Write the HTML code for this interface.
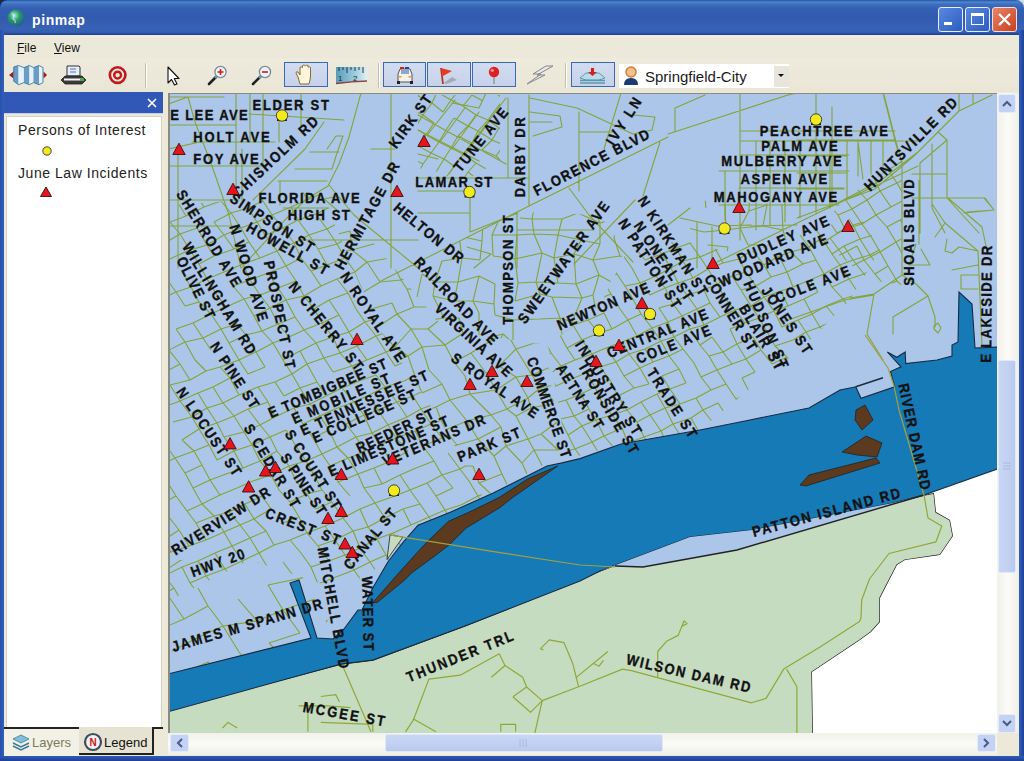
<!DOCTYPE html>
<html><head><meta charset="utf-8">
<style>
*{margin:0;padding:0;box-sizing:border-box}
html,body{width:1024px;height:761px;overflow:hidden;background:#ece9d8;font-family:"Liberation Sans",sans-serif}
.a{position:absolute}
#title{left:0;top:0;width:1024px;height:35px;background:linear-gradient(#2a50a0 0px,#4a88d0 2px,#3f70c0 4px,#345eb2 9px,#325bb0 18px,#3862b4 29px,#3360b0 32px,#1e3e8a 35px);border-radius:8px 8px 0 0}
#lb{left:0;top:30px;width:4px;height:731px;background:linear-gradient(90deg,#2a50a8,#3060bc)}
#rb{left:1019px;top:30px;width:5px;height:731px;background:linear-gradient(90deg,#3060bc,#1f3f98)}
#bb{left:0;top:756px;width:1024px;height:5px;background:linear-gradient(#2f5bb5,#1f3f98)}
#menu{left:4px;top:35px;width:1015px;height:23px;background:linear-gradient(#ecebe6 0px,#ecebe6 1px,#ede9da 2px)}
#tool{left:4px;top:58px;width:1015px;height:34px;background:linear-gradient(#eeebdd,#e9e6d6)}
#ttl{left:32px;top:12px;color:#fff;font-weight:bold;font-size:14px;letter-spacing:0.6px}
.mi{top:41px;font-size:12px;color:#111}
.tb{border:1px solid #3e64b4;background:#d4dcee;height:25px;top:62px}
#panelhdr{left:4px;top:92px;width:159px;height:21px;background:#3158b6}
#panel{left:8px;top:118px;width:152px;height:610px;background:#fff}
.lg{font-size:14px;color:#222;left:18px;letter-spacing:0.55px}
</style></head><body>
<div class="a" style="left:0;top:0;width:8px;height:8px;background:#1a2a50"></div><div class="a" style="left:1016px;top:0;width:8px;height:8px;background:#d8dce8"></div>
<div id="title" class="a"></div>
<svg class="a" style="left:6px;top:8px" width="20" height="20" viewBox="0 0 20 20"><defs><radialGradient id="gl" cx="0.4" cy="0.35" r="0.7"><stop offset="0" stop-color="#b0e8f0"/><stop offset="0.45" stop-color="#2a9a60"/><stop offset="1" stop-color="#1a5a9a"/></radialGradient></defs><circle cx="10" cy="10" r="8.5" fill="url(#gl)"/><path d="M6 5 Q9 8 7 11 Q10 12 9 15" stroke="#d8f0ff" stroke-width="1.2" fill="none" opacity="0.7"/></svg>
<div id="ttl" class="a">pinmap</div>
<!-- title buttons -->
<div class="a" style="left:938px;top:7px;width:25px;height:25px;border:1px solid #e8eefc;border-radius:3px;background:linear-gradient(135deg,#5a88e0,#2c5ec0)"></div>
<div class="a" style="left:944px;top:22px;width:8px;height:3px;background:#fff"></div>
<div class="a" style="left:965px;top:7px;width:25px;height:25px;border:1px solid #e8eefc;border-radius:3px;background:linear-gradient(135deg,#5a88e0,#2c5ec0)"></div>
<div class="a" style="left:971px;top:13px;width:13px;height:12px;border:1px solid #fff;border-top:3px solid #fff"></div>
<div class="a" style="left:992px;top:7px;width:25px;height:25px;border:1px solid #f0e0dc;border-radius:3px;background:linear-gradient(135deg,#e8856a,#c8401e)"></div>
<svg class="a" style="left:992px;top:7px" width="25" height="25"><path d="M7 7 L18 18 M18 7 L7 18" stroke="#fff" stroke-width="2.3"/></svg>
<div id="lb" class="a"></div><div id="rb" class="a"></div><div id="bb" class="a"></div>
<div id="menu" class="a"></div>
<div class="a mi" style="left:17px"><u>F</u>ile</div>
<div class="a mi" style="left:54px"><u>V</u>iew</div>
<div id="tool" class="a"></div>

<svg class="a" style="left:0;top:0" width="1024" height="95" viewBox="0 0 1024 95">
<defs>
<linearGradient id="btn" x1="0" y1="0" x2="0" y2="1"><stop offset="0" stop-color="#d2dcf0"/><stop offset="1" stop-color="#c6d2ea"/></linearGradient>
<linearGradient id="rul" x1="0" y1="0" x2="1" y2="0"><stop offset="0" stop-color="#5a9cb8"/><stop offset="0.6" stop-color="#9ccbdc"/><stop offset="1" stop-color="#e0f0f4"/></linearGradient>
</defs>
<!-- map icon -->
<polygon points="9,75 13.5,71.5 13.5,78.5" fill="#a01818"/>
<polygon points="47,75 43.5,71.5 43.5,78.5" fill="#a01818"/>
<polygon points="13.7,67 18.5,65.5 18.5,84.7 13.7,81.2" fill="#6a9cc4"/>
<polygon points="18.5,65.5 23.9,67.6 23.9,82.6 18.5,84.7" fill="#e4f2fa"/>
<polygon points="23.9,67.6 29.4,65.5 29.4,84.7 23.9,82.6" fill="#6a9cc4"/>
<polygon points="29.4,65.5 33.5,67.6 33.5,82.6 29.4,84.7" fill="#e4f2fa"/>
<polygon points="33.5,67.6 39,65.5 39,84.7 33.5,82.6" fill="#6a9cc4"/>
<polygon points="39,65.5 43,67.6 43,82.6 39,84.7" fill="#e4f2fa"/>
<polygon points="13.7,67 18.5,65.5 23.9,67.6 29.4,65.5 33.5,67.6 39,65.5 43,67.6 43,82.6 39,84.7 33.5,82.6 29.4,84.7 23.9,82.6 18.5,84.7 13.7,81.2" fill="none" stroke="#3d78a8" stroke-width="0.9"/>
<!-- printer -->
<path d="M67 76 V66 H79 L80 67 V76Z" fill="#e8eef8" stroke="#333" stroke-width="1"/>
<path d="M70 69 H76 M70 72 H76" stroke="#5070b0" stroke-width="1"/>
<path d="M61 80 L65 76 H82 L86 80 L82 84 H65Z" fill="#3a3a3a" stroke="#222" stroke-width="0.8"/>
<rect x="64" y="78.5" width="19" height="2" fill="#f4f4f4"/>
<rect x="80" y="78.5" width="4" height="2.5" fill="#40b040"/>
<!-- target -->
<circle cx="117.6" cy="75.1" r="7.8" fill="none" stroke="#c0181c" stroke-width="2.6"/>
<circle cx="117.6" cy="75.1" r="3.4" fill="none" stroke="#c0181c" stroke-width="2.4"/>
<!-- separators -->
<rect x="145" y="63" width="1" height="25" fill="#c4c0b0"/><rect x="146" y="63" width="1" height="25" fill="#fff"/>
<rect x="378" y="63" width="1" height="25" fill="#c4c0b0"/><rect x="379" y="63" width="1" height="25" fill="#fff"/>
<rect x="565" y="63" width="1" height="25" fill="#c4c0b0"/><rect x="566" y="63" width="1" height="25" fill="#fff"/>
<!-- cursor -->
<path d="M168 67 V83 L171.5 79.5 L174.5 85 L177 84 L174.3 78.5 H179Z" fill="#fff" stroke="#111" stroke-width="1.1" stroke-linejoin="round"/>
<!-- zoom in -->
<line x1="209" y1="84" x2="216" y2="77" stroke="#222" stroke-width="2.6" stroke-linecap="round"/>
<line x1="215" y1="78" x2="217" y2="76" stroke="#5aa0c0" stroke-width="2"/>
<circle cx="220.5" cy="72" r="5.6" fill="#f0f4f8" stroke="#7a8a98" stroke-width="1.3"/>
<path d="M217.5 72 H223.5 M220.5 69 V75" stroke="#d01818" stroke-width="1.6"/>
<!-- zoom out -->
<line x1="253" y1="84" x2="260" y2="77" stroke="#222" stroke-width="2.6" stroke-linecap="round"/>
<line x1="259" y1="78" x2="261" y2="76" stroke="#5aa0c0" stroke-width="2"/>
<circle cx="265" cy="72" r="5.6" fill="#f0f4f8" stroke="#7a8a98" stroke-width="1.3"/>
<path d="M262 72 H268" stroke="#d01818" stroke-width="1.6"/>
<!-- hand button -->
<rect x="284.5" y="62.5" width="43" height="24" fill="url(#btn)" stroke="#3a68c0" stroke-width="1"/>
<path d="M300 84 L298 77 L296 73 Q296 71 298 72 L300 75 V68 Q300 66.5 301.5 67 L302.5 67.5 V66 Q303 64.5 304.5 65 L305.5 66 Q306.5 64.5 308 65.5 V67 Q309.5 66.5 310.5 67.5 V76 L310 80 L309 84Z" fill="#fff4dc" stroke="#8a6a30" stroke-width="1"/>
<!-- ruler -->
<path d="M336 67 H367 V81 Q352 82 336 84Z" fill="url(#rul)"/>
<path d="M336 83.5 Q352 81.5 367 81" stroke="#904040" stroke-width="1.3" fill="none"/>
<path d="M339 67 V71 M343 67 V70 M347 67 V73 M351 67 V70 M355 67 V71 M359 67 V70 M363 67 V73" stroke="#1a3a50" stroke-width="1"/>
<text x="338" y="81" font-size="8" font-family="Liberation Sans" fill="#1a2a3a">1</text>
<text x="353" y="81" font-size="8" font-family="Liberation Sans" fill="#1a2a3a">2</text>
<!-- police/flag/pin buttons -->
<rect x="383.5" y="62.5" width="42" height="24" fill="url(#btn)" stroke="#3a68c0" stroke-width="1"/>
<rect x="427.5" y="62.5" width="43" height="24" fill="url(#btn)" stroke="#3a68c0" stroke-width="1"/>
<rect x="472.5" y="62.5" width="43" height="24" fill="url(#btn)" stroke="#3a68c0" stroke-width="1"/>
<!-- police car -->
<path d="M398 82 V74 L400 69 H410 L412 74 V82Z" fill="#f4f2ea" stroke="#555" stroke-width="1"/>
<rect x="400" y="67" width="4" height="2" fill="#d02020"/><rect x="405" y="67" width="4" height="2" fill="#2040c0"/>
<rect x="401" y="70" width="8" height="4" fill="#8aa8d0"/>
<rect x="397" y="81" width="3" height="3" fill="#222"/><rect x="410" y="81" width="3" height="3" fill="#222"/>
<rect x="399" y="76" width="2.5" height="1.5" fill="#e8a020"/><rect x="408.5" y="76" width="2.5" height="1.5" fill="#e8a020"/>
<!-- flag -->
<path d="M443 84 L441 68" stroke="#c03020" stroke-width="1.8"/>
<path d="M441 68 L452 71 L443 76Z" fill="#e83a20"/>
<path d="M444 83 L452 77 L457 80 L446 84Z" fill="#9aa0a8" opacity="0.8"/>
<!-- pin -->
<line x1="494" y1="76" x2="494" y2="84" stroke="#888" stroke-width="1.2"/>
<circle cx="494" cy="72" r="5.2" fill="#e02020"/>
<circle cx="492.3" cy="70.3" r="1.6" fill="#ff9a9a"/>
<!-- lightning -->
<path d="M546 66 L533 74 H541 L527 84 L545 75 H537 L553 66Z" fill="#e8e8e8" stroke="#888" stroke-width="1"/>
<!-- layers button -->
<rect x="571.5" y="62.5" width="43" height="24" fill="url(#btn)" stroke="#3a68c0" stroke-width="1"/>
<path d="M580 78 L586 73 H599 L605 78 L599 80 H586Z" fill="#b8dce8" stroke="#4a8aa0" stroke-width="0.8"/>
<path d="M580 80.5 H605 M580 83 H605" stroke="#5a9ab0" stroke-width="1.5"/>
<path d="M588 72 L592.5 76 L597 72Z" fill="#d02020"/><rect x="591" y="68" width="3" height="4" fill="#d02020"/>
<!-- combo -->
<rect x="619" y="64" width="170" height="24" fill="#fff"/>
<rect x="774" y="66" width="15" height="21" fill="#e8e6dc"/>
<path d="M778 74 H784 L781 77Z" fill="#111"/>
<circle cx="631" cy="72" r="5" fill="#f0c090" stroke="#d08030" stroke-width="1.5"/>
<path d="M624 85 Q624 78 631 78 Q638 78 638 85Z" fill="#1a3a70"/>
<text x="645" y="82" font-size="15" font-family="Liberation Sans" fill="#1a1a1a">Springfield-City</text>
</svg>

<!-- left panel -->
<div id="panelhdr" class="a"></div>
<svg class="a" style="left:146px;top:97px" width="12" height="12"><path d="M2 2 L10 10 M10 2 L2 10" stroke="#fff" stroke-width="1.6"/></svg>
<div class="a" style="left:4px;top:113px;width:159px;height:1px;background:#bcd0f0"></div>
<div class="a" style="left:6px;top:116px;width:156px;height:613px;border:1px solid #d6d2c0;background:#fff"></div>
<div class="a lg" style="top:122px">Persons of Interest</div>
<svg class="a" style="left:40px;top:144px" width="14" height="14"><circle cx="7" cy="7" r="4.2" fill="#f2ea1a" stroke="#333" stroke-width="0.9"/></svg>
<div class="a lg" style="top:165px">June Law Incidents</div>
<svg class="a" style="left:39px;top:185px" width="14" height="14"><polygon points="7,2 12.5,11.5 1.5,11.5" fill="#e8141c" stroke="#3a1010" stroke-width="0.9"/></svg>
<!-- tabs -->
<div class="a" style="left:4px;top:727px;width:75px;height:2px;background:#222"></div><div class="a" style="left:154px;top:727px;width:9px;height:2px;background:#222"></div>
<div class="a" style="left:4px;top:729px;width:75px;height:27px;background:#f3f1e6"></div>
<div class="a" style="left:79px;top:727px;width:75px;height:28px;background:#e6e3d3;border-right:2px solid #222;border-bottom:2px solid #222"></div>
<svg class="a" style="left:11px;top:733px" width="20" height="18"><path d="M2 6 L10 2 L18 6 L10 10Z" fill="#7fc0d8" stroke="#3a7a9a" stroke-width="0.8"/><path d="M2 10 L10 14 L18 10 M2 13 L10 17 L18 13" stroke="#3a7a9a" stroke-width="1.5" fill="none"/></svg>
<div class="a" style="left:32px;top:735px;font-size:13px;color:#7d7860">Layers</div>
<svg class="a" style="left:83px;top:732px" width="20" height="20"><circle cx="10" cy="10" r="8" fill="#f4f0f0" stroke="#3b4e5e" stroke-width="2.2"/><text x="10" y="14" font-size="10" font-weight="bold" fill="#d01818" text-anchor="middle" font-family="Liberation Sans">N</text></svg>
<div class="a" style="left:104px;top:735px;font-size:13px;color:#111">Legend</div>
<!-- map border -->
<div class="a" style="left:168px;top:93px;width:850px;height:662px;background:#f4f2e8"></div>
<div class="a" style="left:168px;top:93px;width:829px;height:1px;background:#8a8a80"></div>
<div class="a" style="left:168px;top:93px;width:2px;height:640px;background:#8a8a80"></div>
<svg class="a" style="left:0;top:0" width="1024" height="761" viewBox="0 0 1024 761">
<defs><clipPath id="mc"><rect x="170" y="94" width="827" height="639"/></clipPath></defs>
<g clip-path="url(#mc)">
<rect x="168" y="93" width="829" height="640" fill="#abc6e8"/>
<clipPath id="rg0"><polygon points="170,205 245,200 320,190 380,330 440,420 483,497 427,522 384,564 340,590 250,560 170,600"/></clipPath>
<g clip-path="url(#rg0)" fill="none" stroke="#84a43a" stroke-width="1.1">
<path d="M-130 256L-120 269M-112 249L-103 264M-112 249L-95 240M-95 240L-84 254M-95 240L-80 236M-80 236L-68 247M-62 226L-51 241M-62 226L-43 220M-43 220L-27 213M-27 213L-18 229M-27 213L-10 204M-10 204L6 200M6 200L16 211M23 192L31 206M23 192L40 183M40 183L49 198M40 183L57 178M57 178L64 193M57 178L72 168M72 168L82 186M72 168L91 163M91 163L101 177M91 163L108 157M108 157L116 170M108 157L124 150M124 150L134 164M124 150L140 143M140 143L150 156M140 143L157 136M157 136L175 126M175 126L190 119M190 119L199 134M209 113L219 128M209 113L225 105M225 105L234 118M241 98L250 114M241 98L258 92M258 92L266 106M275 86L292 79M292 79L302 92M292 79L310 72M310 72L319 84M310 72L326 62M326 62L344 58M344 58L350 69M344 58L361 49M361 49L369 65M361 49L377 40M377 40L384 56M377 40L394 35M394 35L402 48M394 35L409 26M409 26L428 22M428 22L435 35M428 22L442 14M442 14L452 27M-120 269L-109 283M-103 264L-93 278M-103 264L-84 254M-84 254L-77 270M-84 254L-68 247M-68 247L-58 262M-68 247L-51 241M-51 241L-44 256M-51 241L-34 236M-18 229L-10 241M-18 229L-2 219M-2 219L16 211M16 211L26 226M16 211L31 206M31 206L49 198M49 198L60 213M49 198L64 193M82 186L92 198M101 177L110 193M101 177L116 170M116 170L124 184M116 170L134 164M134 164L144 178M134 164L150 156M150 156L160 170M150 156L168 149M183 142L194 155M183 142L199 134M199 134L209 149M199 134L219 128M219 128L226 142M219 128L234 118M234 118L245 134M234 118L250 114M250 114L266 106M266 106L278 122M266 106L285 97M285 97L302 92M302 92L312 105M302 92L319 84M319 84L328 100M319 84L336 78M336 78L345 92M336 78L350 69M350 69L360 84M350 69L369 65M369 65L377 76M384 56L395 70M384 56L402 48M402 48L413 62M402 48L419 41M419 41L430 57M419 41L435 35M435 35L447 50M435 35L452 27M452 27L464 42M-109 283L-102 300M-109 283L-93 278M-93 278L-85 291M-77 270L-66 285M-77 270L-58 262M-58 262L-50 279M-58 262L-44 256M-44 256L-33 270M-44 256L-25 248M-25 248L-17 265M-25 248L-10 241M-10 241L0 257M-10 241L9 235M26 226L34 243M41 221L50 236M41 221L60 213M60 213L69 229M74 205L86 219M74 205L92 198M92 198L102 215M92 198L110 193M110 193L117 206M110 193L124 184M124 184L134 199M124 184L144 178M144 178L152 192M160 170L175 163M175 163L184 176M175 163L194 155M194 155L201 169M194 155L209 149M209 149L221 165M209 149L226 142M226 142L234 156M226 142L245 134M245 134L252 149M245 134L258 129M258 129L269 143M278 122L294 115M294 115L302 127M294 115L312 105M312 105L319 121M312 105L328 100M328 100L338 113M328 100L345 92M345 92L352 105M345 92L360 84M360 84L377 76M377 76L388 92M395 70L405 85M413 62L430 57M430 57L438 72M430 57L447 50M447 50L454 64M447 50L464 42M464 42L471 56M-102 300L-91 314M-102 300L-85 291M-85 291L-76 306M-85 291L-66 285M-66 285L-58 301M-66 285L-50 279M-50 279L-39 292M-50 279L-33 270M-33 270L-17 265M-17 265L-8 278M-17 265L0 257M0 257L8 272M0 257L17 248M17 248L27 265M17 248L34 243M34 243L44 257M34 243L50 236M50 236L61 250M50 236L69 229M69 229L76 243M69 229L86 219M86 219L92 234M86 219L102 215M102 215L117 206M117 206L134 199M152 192L160 208M152 192L170 183M170 183L177 201M184 176L196 194M201 169L213 186M201 169L221 165M221 165L230 176M221 165L234 156M234 156L246 171M234 156L252 149M252 149L263 162M252 149L269 143M269 143L280 158M269 143L287 134M287 134L294 149M287 134L302 127M302 127L313 144M302 127L319 121M319 121L329 134M319 121L338 113M338 113L345 128M338 113L352 105M352 105L364 120M352 105L370 100M370 100L388 92M388 92L396 106M405 85L421 77M421 77L432 92M421 77L438 72M438 72L448 84M438 72L454 64M454 64L465 79M454 64L471 56M471 56L482 71M-91 314L-82 329M-91 314L-76 306M-76 306L-64 320M-76 306L-58 301M-58 301L-39 292M-39 292L-22 286M-22 286L-15 300M-22 286L-8 278M-8 278L1 292M8 272L18 286M8 272L27 265M27 265L44 257M44 257L54 273M61 250L69 265M61 250L76 243M76 243L86 258M76 243L92 234M92 234L104 249M92 234L112 226M112 226L119 241M112 226L126 219M126 219L137 235M126 219L146 213M146 213L153 228M146 213L160 208M160 208L170 222M160 208L177 201M177 201L186 216M177 201L196 194M196 194L204 207M196 194L213 186M213 186L221 201M213 186L230 176M230 176L246 171M246 171L255 186M246 171L263 162M263 162L273 178M263 162L280 158M280 158L289 173M280 158L294 149M294 149L305 163M294 149L313 144M313 144L321 158M313 144L329 134M329 134L340 151M329 134L345 128M345 128L357 142M364 120L372 134M380 113L388 129M380 113L396 106M396 106L407 123M412 100L422 115M412 100L432 92M432 92L439 106M432 92L448 84M448 84L457 98M448 84L465 79M465 79L472 94M465 79L482 71M482 71L490 85M-82 329L-72 343M-82 329L-64 320M-64 320L-57 335M-64 320L-50 315M-50 315L-39 328M-50 315L-30 307M-30 307L-23 322M-30 307L-15 300M1 292L18 286M18 286L28 300M18 286L35 277M35 277L44 294M35 277L54 273M54 273L64 284M54 273L69 265M69 265L81 278M69 265L86 258M86 258L104 249M104 249L119 241M119 241L130 258M119 241L137 235M137 235L146 251M137 235L153 228M153 228L165 243M153 228L170 222M170 222L180 234M170 222L186 216M186 216L204 207M204 207L221 201M221 201L231 213M221 201L239 193M255 186L263 201M255 186L273 178M273 178L282 191M289 173L299 184M289 173L305 163M305 163L314 179M305 163L321 158M321 158L332 172M321 158L340 151M340 151L349 164M340 151L357 142M357 142L364 156M357 142L372 134M372 134L380 151M372 134L388 129M388 129L400 143M388 129L407 123M407 123L416 135M407 123L422 115M422 115L432 128M422 115L439 106M439 106L450 120M457 98L466 113M457 98L472 94M472 94L484 106M472 94L490 85M490 85L499 100M-72 343L-63 358M-72 343L-57 335M-57 335L-47 351M-57 335L-39 328M-39 328L-23 322M-23 322L-14 334M-23 322L-4 314M-4 314L5 329M-4 314L12 306M12 306L20 320M12 306L28 300M28 300L38 315M28 300L44 294M44 294L56 308M44 294L64 284M64 284L72 299M64 284L81 278M81 278L88 292M81 278L97 272M97 272L112 265M112 265L121 278M112 265L130 258M130 258L146 251M146 251L157 266M165 243L180 234M180 234L190 250M180 234L197 228M197 228L207 245M214 222L224 235M214 222L231 213M231 213L241 228M231 213L248 208M248 208L257 222M248 208L263 201M263 201L272 215M299 184L307 200M299 184L314 179M314 179L323 193M332 172L339 186M332 172L349 164M349 164L358 178M364 156L375 173M364 156L380 151M380 151L393 163M380 151L400 143M400 143L409 158M400 143L416 135M416 135L423 150M416 135L432 128M432 128L441 141M432 128L450 120M466 113L475 130M466 113L484 106M484 106L493 120M484 106L499 100M499 100L510 115M-63 358L-52 372M-63 358L-47 351M-47 351L-36 364M-47 351L-31 342M-31 342L-19 359M-31 342L-14 334M-14 334L-2 350M-14 334L5 329M5 329L15 343M5 329L20 320M20 320L29 334M20 320L38 315M38 315L46 328M38 315L56 308M56 308L63 322M56 308L72 299M72 299L82 315M72 299L88 292M88 292L98 308M88 292L105 286M105 286L121 278M121 278L132 293M140 270L147 287M140 270L157 266M157 266L166 278M157 266L174 257M174 257L190 250M190 250L199 264M190 250L207 245M207 245L214 256M207 245L224 235M224 235L234 249M224 235L241 228M241 228L249 242M241 228L257 222M257 222L265 235M257 222L272 215M272 215L283 228M272 215L291 207M291 207L298 220M291 207L307 200M307 200L323 193M323 193L339 186M339 186L350 200M339 186L358 178M358 178L375 173M375 173L384 186M375 173L393 163M393 163L399 180M393 163L409 158M409 158L417 170M409 158L423 150M423 150L434 163M423 150L441 141M441 141L452 157M441 141L459 137M459 137L467 149M459 137L475 130M475 130L493 120M493 120L503 136M493 120L510 115M510 115L520 128M-52 372L-45 385M-52 372L-36 364M-36 364L-19 359M-19 359L-11 370M-19 359L-2 350M-2 350L7 366M-2 350L15 343M15 343L24 356M15 343L29 334M29 334L38 349M29 334L46 328M46 328L63 322M63 322L72 337M63 322L82 315M82 315L98 308M98 308L109 322M98 308L114 300M114 300L125 316M114 300L132 293M132 293L147 287M147 287L157 301M147 287L166 278M166 278L176 292M182 272L191 287M199 264L207 279M199 264L214 256M214 256L234 249M234 249L249 242M249 242L260 258M265 235L277 251M265 235L283 228M283 228L294 243M283 228L298 220M298 220L309 235M298 220L316 214M316 214L327 229M316 214L332 206M332 206L350 200M350 200L360 215M350 200L368 192M384 186L393 199M384 186L399 180M399 180L411 192M399 180L417 170M417 170L427 187M417 170L434 163M434 163L444 178M452 157L460 173M452 157L467 149M467 149L478 166M467 149L486 142M486 142L503 136M503 136L512 151M503 136L520 128M520 128L527 143M-45 385L-36 400M-45 385L-26 379M-26 379L-16 392M-26 379L-11 370M-11 370L7 366M7 366L14 380M7 366L24 356M24 356L32 370M24 356L38 349M38 349L48 365M38 349L56 342M56 342L66 356M92 328L99 344M109 322L116 337M109 322L125 316M125 316L142 306M142 306L157 301M157 301L166 313M157 301L176 292M176 292L185 306M176 292L191 287M191 287L199 302M191 287L207 279M207 279L217 295M207 279L224 272M224 272L243 264M243 264L250 280M243 264L260 258M260 258L277 251M277 251L286 266M277 251L294 243M294 243L301 258M294 243L309 235M309 235L318 249M309 235L327 229M327 229L337 244M327 229L342 221M342 221L353 235M342 221L360 215M360 215L369 229M360 215L377 207M377 207L387 220M393 199L402 215M393 199L411 192M411 192L418 208M427 187L437 200M427 187L444 178M444 178L454 194M444 178L460 173M460 173L469 186M460 173L478 166M478 166L488 179M478 166L496 157M496 157L503 170M496 157L512 151M512 151L520 164M527 143L539 159M-36 400L-24 417M-36 400L-16 392M-16 392L-8 410M-16 392L-1 385M-1 385L8 400M14 380L27 395M14 380L32 370M32 370L44 386M32 370L48 365M82 352L92 367M82 352L99 344M99 344L108 356M99 344L116 337M116 337L127 350M116 337L134 330M134 330L143 344M150 321L158 337M150 321L166 313M185 306L199 302M199 302L211 314M217 295L226 307M233 286L244 299M233 286L250 280M250 280L260 295M250 280L268 273M268 273L278 288M268 273L286 266M286 266L296 281M286 266L301 258M301 258L311 271M318 249L327 265M318 249L337 244M337 244L345 258M337 244L353 235M353 235L369 229M369 229L378 244M369 229L387 220M387 220L397 238M387 220L402 215M402 215L411 228M402 215L418 208M418 208L430 220M418 208L437 200M437 200L454 194M454 194L463 207M454 194L469 186M469 186L478 200M469 186L488 179M488 179L503 170M503 170L515 188M503 170L520 164M520 164L532 178M520 164L539 159M539 159L546 170M-24 417L-16 429M-24 417L-8 410M-8 410L-1 423M-8 410L8 400M8 400L27 395M27 395L34 409M27 395L44 386M44 386L60 379M60 379L67 394M60 379L77 374M77 374L92 367M92 367L103 381M92 367L108 356M108 356L118 371M108 356L127 350M127 350L136 366M127 350L143 344M143 344L152 359M143 344L158 337M158 337L169 350M176 329L185 342M176 329L193 323M193 323L203 338M193 323L211 314M211 314L221 329M211 314L226 307M226 307L244 299M244 299L254 316M244 299L260 295M260 295L270 308M260 295L278 288M278 288L286 300M278 288L296 281M296 281L304 296M311 271L321 286M311 271L327 265M327 265L345 258M345 258L355 272M345 258L361 252M361 252L373 264M361 252L378 244M378 244L387 258M378 244L397 238M397 238L404 252M397 238L411 228M411 228L423 245M411 228L430 220M430 220L439 235M444 215L455 230M444 215L463 207M463 207L472 222M463 207L478 200M478 200L490 217M478 200L497 194M515 188L522 201M515 188L532 178M532 178L546 170M546 170L557 186M-16 429L-5 443M-16 429L-1 423M-1 423L10 438M-1 423L16 415M16 415L26 429M16 415L34 409M34 409L46 424M34 409L51 400M51 400L60 415M51 400L67 394M67 394L77 407M67 394L86 387M86 387L94 403M86 387L103 381M103 381L118 371M118 371L127 385M118 371L136 366M136 366L145 381M136 366L152 359M152 359L169 350M169 350L180 364M169 350L185 342M185 342L195 360M185 342L203 338M203 338L211 350M203 338L221 329M221 329L229 343M221 329L237 324M237 324L246 335M254 316L262 331M254 316L270 308M270 308L278 324M270 308L286 300M286 300L295 317M286 300L304 296M304 296L314 309M304 296L321 286M321 286L337 279M337 279L348 293M337 279L355 272M355 272L362 288M355 272L373 264M373 264L382 278M373 264L387 258M387 258L399 273M404 252L414 264M404 252L423 245M423 245L430 260M423 245L439 235M439 235L447 250M455 230L463 243M455 230L472 222M472 222L481 238M472 222L490 217M490 217L497 229M490 217L504 209M504 209L517 224M504 209L522 201M522 201L534 215M522 201L541 196M541 196L548 210M541 196L557 186M557 186L566 202M-5 443L2 457M-5 443L10 438M26 429L38 444M26 429L46 424M46 424L60 415M77 407L88 422M77 407L94 403M94 403L110 393M110 393L122 407M110 393L127 385M127 385L139 403M127 385L145 381M145 381L163 373M163 373L170 385M163 373L180 364M180 364L190 380M195 360L206 371M229 343L239 360M229 343L246 335M246 335L256 352M246 335L262 331M262 331L273 343M262 331L278 324M278 324L289 337M278 324L295 317M295 317L304 330M314 309L322 323M314 309L329 300M329 300L339 315M329 300L348 293M348 293L356 309M362 288L375 303M382 278L391 296M382 278L399 273M399 273L406 289M414 264L423 279M414 264L430 260M430 260L440 274M430 260L447 250M447 250L457 266M447 250L463 243M463 243L473 260M463 243L481 238M481 238L491 251M481 238L497 229M497 229L508 246M497 229L517 224M517 224L526 237M517 224L534 215M534 215L541 230M548 210L566 202M566 202L576 217M2 457L11 474M2 457L19 452M19 452L29 468M38 444L46 458M38 444L53 437M53 437L63 453M53 437L70 430M70 430L79 446M70 430L88 422M88 422L97 437M104 417L122 407M122 407L130 422M122 407L139 403M139 403L147 417M139 403L153 393M153 393L164 407M153 393L170 385M170 385L180 401M170 385L190 380M190 380L206 371M206 371L220 367M220 367L230 378M220 367L239 360M239 360L248 374M239 360L256 352M256 352L265 367M256 352L273 343M273 343L283 360M273 343L289 337M289 337L304 330M304 330L316 343M304 330L322 323M322 323L333 337M322 323L339 315M339 315L349 332M356 309L365 322M375 303L384 316M375 303L391 296M391 296L398 307M406 289L416 300M406 289L423 279M423 279L434 293M423 279L440 274M457 266L467 280M457 266L473 260M473 260L491 251M491 251L500 264M491 251L508 246M508 246L519 259M508 246L526 237M526 237L532 251M541 230L552 246M541 230L557 223M557 223L566 236M557 223L576 217M576 217L584 230M11 474L23 489M11 474L29 468M29 468L38 480M29 468L46 458M46 458L56 475M46 458L63 453M63 453L71 466M63 453L79 446M79 446L88 459M97 437L112 430M112 430L123 445M112 430L130 422M130 422L138 436M130 422L147 417M147 417L156 432M147 417L164 407M164 407L180 401M180 401L192 417M180 401L198 393M198 393L207 408M198 393L213 387M213 387L223 403M213 387L230 378M230 378L239 395M248 374L265 367M283 360L292 374M283 360L300 351M300 351L307 364M300 351L316 343M316 343L324 358M316 343L333 337M333 337L340 353M333 337L349 332M349 332L357 346M349 332L365 322M365 322L376 336M365 322L384 316M384 316L393 330M384 316L398 307M398 307L416 300M416 300L424 316M416 300L434 293M434 293L449 287M449 287L460 300M449 287L467 280M467 280L484 274M484 274L500 264M500 264L519 259M519 259L526 272M519 259L532 251M532 251L542 266M532 251L552 246M552 246L560 258M566 236L584 230M584 230L594 245M23 489L30 503M23 489L38 480M38 480L48 495M38 480L56 475M71 466L81 479M71 466L88 459M88 459L99 475M88 459L104 453M104 453L115 466M123 445L131 460M123 445L138 436M138 436L150 451M138 436L156 432M156 432L167 447M173 422L192 417M192 417L199 429M192 417L207 408M207 408L217 423M207 408L223 403M223 403L234 416M223 403L239 395M239 395L258 387M258 387L268 402M258 387L275 382M275 382L284 396M275 382L292 374M292 374L300 388M292 374L307 364M307 364L317 382M307 364L324 358M324 358L333 372M324 358L340 353M340 353L352 366M340 353L357 346M357 346L367 360M357 346L376 336M376 336L386 352M376 336L393 330M393 330L403 346M393 330L408 322M408 322L424 316M424 316L433 331M424 316L442 310M442 310L452 323M442 310L460 300M460 300L468 316M460 300L476 294M476 294L484 310M476 294L492 287M492 287L502 302M492 287L509 281M509 281L526 272M526 272L535 288M526 272L542 266M542 266L552 280M542 266L560 258M560 258L568 273M560 258L578 251M578 251L587 265M578 251L594 245M30 503L39 516M30 503L48 495M48 495L65 488M65 488L74 504M65 488L81 479M81 479L92 495M81 479L99 475M99 475L115 466M115 466L124 480M115 466L131 460M131 460L143 472M131 460L150 451M150 451L160 466M150 451L167 447M167 447L175 458M182 440L194 451M182 440L199 429M199 429L209 445M199 429L217 423M217 423L224 437M217 423L234 416M234 416L244 432M234 416L248 409M248 409L260 425M248 409L268 402M268 402L275 417M284 396L300 388M300 388L310 404M300 388L317 382M317 382L326 396M333 372L352 366M352 366L359 381M352 366L367 360M367 360L386 352M386 352L395 366M386 352L403 346M403 346L419 337M419 337L428 351M419 337L433 331M433 331L444 345M433 331L452 323M452 323L468 316M468 316L477 331M468 316L484 310M484 310L494 324M518 295L530 310M518 295L535 288M535 288L545 300M535 288L552 280M552 280L562 296M552 280L568 273M568 273L580 287M568 273L587 265M587 265L602 259M602 259L613 274M39 516L51 530M39 516L56 508M56 508L67 524M56 508L74 504M74 504L84 515M92 495L99 510M92 495L107 486M107 486L118 501M124 480L132 494M124 480L143 472M143 472L152 488M160 466L168 483M160 466L175 458M175 458L185 473M175 458L194 451M194 451L202 465M194 451L209 445M209 445L217 460M224 437L234 451M224 437L244 432M244 432L252 445M244 432L260 425M260 425L270 437M260 425L275 417M275 417L294 408M294 408L303 424M294 408L310 404M310 404L320 416M310 404L326 396M326 396L342 388M342 388L354 402M342 388L359 381M359 381L376 375M376 375L385 387M395 366L411 359M411 359L420 373M411 359L428 351M428 351L435 365M444 345L453 358M444 345L461 336M461 336L471 352M461 336L477 331M477 331L488 346M494 324L505 339M494 324L512 318M512 318L521 331M512 318L530 310M530 310L537 322M562 296L570 311M562 296L580 287M580 287L594 282M594 282L605 294M594 282L613 274M613 274L624 287M51 530L59 547M51 530L67 524M67 524L75 538M67 524L84 515M84 515L93 530M84 515L99 510M99 510L111 524M99 510L118 501M118 501L125 517M118 501L132 494M132 494L142 510M152 488L162 504M152 488L168 483M168 483L176 496M185 473L193 488M185 473L202 465M202 465L210 480M217 460L234 451M234 451L243 468M234 451L252 445M252 445L260 461M252 445L270 437M270 437L277 451M270 437L286 430M286 430L296 446M303 424L313 438M303 424L320 416M320 416L329 430M320 416L335 409M335 409L354 402M354 402L364 415M354 402L369 395M369 395L378 410M369 395L385 387M385 387L397 402M385 387L404 381M404 381L420 373M420 373L435 365M435 365L447 379M435 365L453 358M453 358L462 375M453 358L471 352M471 352L479 367M488 346L496 359M488 346L505 339M505 339L514 353M505 339L521 331M521 331L532 345M537 322L546 338M537 322L556 317M556 317L562 330M556 317L570 311M570 311L581 324M570 311L589 303M589 303L597 316M624 287L631 302M59 547L70 560M59 547L75 538M93 530L101 546M93 530L111 524M111 524L120 538M111 524L125 517M125 517L137 530M142 510L152 523M142 510L162 504M162 504L176 496M176 496L187 511M193 488L202 504M193 488L210 480M210 480L220 495M210 480L226 474M226 474L243 468M243 468L260 461M260 461L271 475M260 461L277 451M277 451L289 466M296 446L306 461M313 438L322 454M313 438L329 430M329 430L337 447M346 424L356 437M346 424L364 415M364 415L372 433M364 415L378 410M378 410L388 425M378 410L397 402M397 402L407 417M397 402L413 396M413 396L421 409M413 396L429 388M429 388L440 402M429 388L447 379M447 379L455 395M447 379L462 375M462 375L474 388M462 375L479 367M479 367L488 383M479 367L496 359M496 359L506 374M496 359L514 353M514 353L525 366M532 345L538 361M532 345L546 338M546 338L562 330M562 330L575 345M562 330L581 324M581 324L592 338M581 324L597 316M597 316L606 330M597 316L613 308M613 308L624 324M631 302L640 317M70 560L77 576M70 560L85 552M85 552L101 546M101 546L113 558M101 546L120 538M120 538L128 552M120 538L137 530M137 530L152 523M152 523L164 540M152 523L169 517M169 517L179 530M187 511L196 523M187 511L202 504M202 504L214 516M202 504L220 495M220 495L237 488M237 488L253 481M253 481L271 475M271 475L279 490M271 475L289 466M289 466L296 481M289 466L306 461M306 461L314 475M306 461L322 454M322 454L330 466M322 454L337 447M337 447L348 458M337 447L356 437M356 437L365 452M356 437L372 433M372 433L380 445M372 433L388 425M388 425L396 438M388 425L407 417M407 417L421 409M421 409L431 424M421 409L440 402M440 402L455 395M455 395L465 411M455 395L474 388M474 388L482 402M474 388L488 383M488 383L498 397M488 383L506 374M506 374L516 388M525 366L532 383M525 366L538 361M538 361L549 374M538 361L556 352M556 352L575 345M575 345L583 360M575 345L592 338M592 338L600 353M592 338L606 330M606 330L616 347M624 324L632 340M624 324L640 317M640 317L649 333M77 576L86 590M77 576L96 568M96 568L104 580M113 558L121 576M113 558L128 552M128 552L139 569M128 552L144 548M144 548L156 559M144 548L164 540M164 540L171 552M164 540L179 530M179 530L189 546M196 523L206 540M196 523L214 516M214 516L224 532M214 516L229 512M229 512L240 525M229 512L245 504M245 504L254 519M245 504L262 496M262 496L271 509M279 490L290 502M296 481L307 494M314 475L322 490M330 466L338 482M330 466L348 458M348 458L358 474M348 458L365 452M380 445L391 461M380 445L396 438M396 438L408 451M396 438L415 431M415 431L423 446M415 431L431 424M431 424L442 438M431 424L448 418M448 418L458 430M448 418L465 411M465 411L476 424M482 402L498 397M516 388L526 404M516 388L532 383M532 383L541 395M532 383L549 374M549 374L566 365M566 365L575 381M566 365L583 360M583 360L592 375M583 360L600 353M600 353L616 347M616 347L627 361M616 347L632 340M632 340L642 352M632 340L649 333M649 333L661 347M86 590L97 603M86 590L104 580M104 580L115 596M104 580L121 576M121 576L130 588M121 576L139 569M139 569L156 559M156 559L164 576M156 559L171 552M171 552L189 546M189 546L206 540M206 540L224 532M224 532L232 546M224 532L240 525M240 525L250 538M240 525L254 519M254 519L266 531M254 519L271 509M290 502L299 517M290 502L307 494M307 494L316 509M307 494L322 490M322 490L332 502M338 482L350 496M338 482L358 474M358 474L364 488M358 474L374 468M374 468L382 484M374 468L391 461M391 461L408 451M423 446L434 461M423 446L442 438M442 438L458 430M458 430L476 424M476 424L485 438M476 424L491 418M491 418L500 432M507 411L518 425M507 411L526 404M526 404L536 418M526 404L541 395M541 395L551 409M541 395L557 390M557 390L568 403M557 390L575 381M575 381L585 396M592 375L600 387M592 375L608 367M608 367L627 361M627 361L636 375M627 361L642 352M642 352L651 368M642 352L661 347M661 347L669 359M97 603L107 617M97 603L115 596M115 596L125 609M115 596L130 588M130 588L147 582M147 582L164 576M164 576L174 588M164 576L182 567M182 567L190 583M182 567L198 561M198 561L206 576M198 561L215 553M215 553L225 569M215 553L232 546M232 546L242 561M232 546L250 538M250 538L259 553M250 538L266 531M266 531L274 545M283 523L299 517M299 517L307 533M316 509L332 502M332 502L343 518M364 488L375 503M364 488L382 484M382 484L400 475M400 475L410 490M400 475L416 468M416 468L434 461M434 461L442 475M448 453L460 469M467 444L476 460M467 444L485 438M485 438L494 452M485 438L500 432M500 432L518 425M518 425L527 439M518 425L536 418M536 418L543 432M536 418L551 409M551 409L560 427M568 403L579 418M568 403L585 396M585 396L596 412M600 387L610 405M600 387L617 380M617 380L629 398M617 380L636 375M636 375L646 389M636 375L651 368M651 368L660 383M651 368L669 359M669 359L677 376M107 617L116 633M107 617L125 609M125 609L139 602M139 602L151 618M139 602L158 598M158 598L166 611M158 598L174 588M174 588L183 604M190 583L200 596M190 583L206 576M206 576L218 591M206 576L225 569M225 569L234 581M225 569L242 561M242 561L249 576M242 561L259 553M259 553L268 568M259 553L274 545M274 545L290 540M290 540L301 553M290 540L307 533M307 533L318 546M307 533L325 526M325 526L335 540M325 526L343 518M343 518L353 531M343 518L360 509M360 509L368 527M360 509L375 503M375 503L385 518M375 503L392 497M392 497L410 490M410 490L420 504M410 490L427 483M427 483L436 496M427 483L442 475M442 475L453 488M442 475L460 469M460 469L469 481M460 469L476 460M494 452L503 469M511 444L519 461M511 444L527 439M527 439L535 455M527 439L543 432M543 432L560 427M560 427L568 441M560 427L579 418M579 418L585 432M579 418L596 412M596 412L610 405M610 405L620 419M610 405L629 398M629 398L638 410M629 398L646 389M646 389L655 403M646 389L660 383M660 383L672 396M660 383L677 376M116 633L124 646M116 633L132 624M132 624L151 618M151 618L159 634M151 618L166 611M166 611L176 625M166 611L183 604M183 604L200 596M200 596L210 612M200 596L218 591M218 591L225 604M218 591L234 581M234 581L245 598M234 581L249 576M249 576L258 588M268 568L276 584M283 562L292 574M301 553L311 567M318 546L329 561M318 546L335 540M335 540L345 555M335 540L353 531M353 531L360 548M353 531L368 527M368 527L377 539M368 527L385 518M385 518L403 509M403 509L411 525M403 509L420 504M420 504L429 517M436 496L445 510M436 496L453 488M469 481L478 496M487 476L494 490M487 476L503 469M503 469L511 484M503 469L519 461M519 461L527 477M519 461L535 455M535 455L546 469M535 455L554 448M554 448L562 459M554 448L568 441M568 441L578 454M568 441L585 432M585 432L595 445M604 424L614 441M604 424L620 419M620 419L638 410M638 410L655 403M655 403L664 418M655 403L672 396M672 396L686 391M686 391L696 403M124 646L134 660M124 646L143 638M143 638L153 654M143 638L159 634M159 634L169 648M159 634L176 625M176 625L184 641M176 625L193 619M193 619L203 632M210 612L217 627M225 604L237 619M225 604L245 598M245 598L252 612M245 598L258 588M258 588L268 603M276 584L286 598M276 584L292 574M292 574L301 591M311 567L318 584M311 567L329 561M329 561L345 555M345 555L354 570M345 555L360 548M360 548L370 562M360 548L377 539M377 539L386 555M377 539L393 533M393 533L402 548M393 533L411 525M411 525L429 517M429 517L439 532M429 517L445 510M445 510L453 525M445 510L461 505M461 505L478 496M478 496L488 513M478 496L494 490M494 490L505 505M494 490L511 484M511 484L523 498M511 484L527 477M527 477L538 489M527 477L546 469M546 469L554 483M546 469L562 459M562 459L571 476M578 454L588 469M595 445L606 462M595 445L614 441M631 434L640 446M631 434L647 427M647 427L657 442M664 418L672 434M664 418L680 409M680 409L696 403M696 403L707 419M134 660L144 674M134 660L153 654M153 654L169 648M169 648L177 662M184 641L196 655M203 632L212 646M203 632L217 627M217 627L229 640M237 619L246 631M252 612L260 627M252 612L268 603M268 603L286 598M286 598L301 591M301 591L312 604M301 591L318 584M318 584L331 597M318 584L336 577M336 577L354 570M354 570L363 583M354 570L370 562M370 562L380 577M370 562L386 555M386 555L395 570M402 548L414 560M421 538L430 553M439 532L446 548M439 532L453 525M453 525L464 541M453 525L469 518M469 518L479 531M469 518L488 513M488 513L497 526M505 505L515 518M505 505L523 498M523 498L532 512M523 498L538 489M538 489L547 505M538 489L554 483M554 483L563 498M554 483L571 476M571 476L580 488M571 476L588 469M588 469L598 483M588 469L606 462M606 462L621 453M621 453L640 446M640 446L647 460M640 446L657 442M657 442L667 454M657 442L672 434M672 434L681 446M672 434L690 427M690 427L707 419M707 419L716 434M144 674L153 691M161 669L172 684M161 669L177 662M177 662L187 676M177 662L196 655M196 655L203 669M212 646L221 662M212 646L229 640M229 640L246 631M246 631L253 648M246 631L260 627M260 627L273 638M260 627L278 619M278 619L296 611M296 611L303 627M296 611L312 604M312 604L322 617M331 597L339 610M331 597L347 589M347 589L356 604M347 589L363 583M363 583L374 599M380 577L388 590M380 577L395 570M395 570L404 584M395 570L414 560M414 560L421 574M414 560L430 553M430 553L438 570M430 553L446 548M446 548L455 561M446 548L464 541M464 541L473 555M464 541L479 531M479 531L490 549M479 531L497 526M497 526L506 540M497 526L515 518M515 518L525 532M515 518L532 512M532 512L539 527M547 505L556 520M547 505L563 498M563 498L580 488M580 488L598 483M598 483L609 497M598 483L615 475M615 475L624 489M615 475L633 470M633 470L640 484M633 470L647 460M647 460L657 476M647 460L667 454M667 454L675 469M667 454L681 446M681 446L700 439M716 434L727 448M172 684L187 676M187 676L197 692M187 676L203 669M203 669L213 682M203 669L221 662M221 662L237 655M237 655L246 671M237 655L253 648M253 648L265 663M253 648L273 638M273 638L279 656M273 638L287 635M287 635L297 646M303 627L315 642M303 627L322 617M322 617L339 610M339 610L349 625M339 610L356 604M356 604L364 620M356 604L374 599M374 599L381 614M374 599L388 590M388 590L400 606M388 590L404 584M404 584L416 596M404 584L421 574M421 574L432 591M421 574L438 570M438 570L449 583M438 570L455 561M455 561L465 575M455 561L473 555M473 555L484 568M490 549L498 564M506 540L516 555M506 540L525 532M525 532L532 546M525 532L539 527M539 527L549 542M539 527L556 520M575 511L583 528M590 503L599 519M590 503L609 497M609 497L616 510M609 497L624 489M624 489L634 504M624 489L640 484M640 484L657 476M657 476L667 490M657 476L675 469M675 469L686 482M675 469L692 461M692 461L701 477M692 461L708 456M708 456L718 468M708 456L727 448M727 448L736 460M162 706L178 696M178 696L189 713M178 696L197 692M197 692L205 704M213 682L224 696M232 675L238 691M232 675L246 671M246 671L255 684M265 663L272 677M265 663L279 656M279 656L291 669M279 656L297 646M297 646L306 662M315 642L324 653M315 642L329 633M329 633L340 647M349 625L364 620M364 620L374 632M364 620L381 614M381 614L392 626M381 614L400 606M416 596L423 611M416 596L432 591M432 591L443 604M432 591L449 583M449 583L465 575M465 575L477 592M465 575L484 568M484 568L498 564M498 564L509 575M498 564L516 555M516 555L532 546M549 542L559 555M549 542L566 535M566 535L576 548M566 535L583 528M583 528L599 519M599 519L611 533M616 510L626 528M616 510L634 504M634 504L644 519M634 504L651 496M651 496L667 490M667 490L677 504M667 490L686 482M686 482L692 498M686 482L701 477M701 477L710 492M701 477L718 468M718 468L727 483M736 460L745 476M171 717L180 733M189 713L197 726M189 713L205 704M205 704L217 721M205 704L224 696M224 696L232 711M224 696L238 691M238 691L248 704M238 691L255 684M255 684L265 698M255 684L272 677M272 677L291 669M291 669L299 684M291 669L306 662M306 662L317 676M306 662L324 653M324 653L333 668M324 653L340 647M340 647L350 663M340 647L357 640M357 640L365 655M357 640L374 632M374 632L383 647M374 632L392 626M392 626L399 642M392 626L407 618M407 618L416 632M407 618L423 611M423 611L443 604M443 604L450 619M443 604L458 599M458 599L467 611M477 592L484 605M477 592L491 583M491 583L500 598M491 583L509 575M509 575L517 592M509 575L525 568M525 568L536 582M525 568L541 563M541 563L552 576M541 563L559 555M559 555L567 571M559 555L576 548M576 548L587 563M593 539L603 557M593 539L611 533M611 533L619 548M611 533L626 528M626 528L636 542M626 528L644 519M644 519L654 533M644 519L658 512M658 512L668 527M658 512L677 504M677 504L687 519M677 504L692 498M692 498L704 514M692 498L710 492M710 492L720 505M710 492L727 483M727 483L745 476M745 476L755 489M180 733L192 748M180 733L197 726M197 726L217 721M217 721L225 734M232 711L242 725M232 711L248 704M248 704L260 719M248 704L265 698M265 698L275 713M265 698L281 691M281 691L292 705M281 691L299 684M299 684L308 698M299 684L317 676M317 676L324 690M317 676L333 668M333 668L344 682M350 663L358 678M350 663L365 655M365 655L376 670M365 655L383 647M383 647L393 663M383 647L399 642M399 642L409 656M399 642L416 632M416 632L425 649M433 626L443 641M433 626L450 619M450 619L459 635M450 619L467 611M467 611L476 627M467 611L484 605M484 605L493 621M484 605L500 598M500 598L512 611M500 598L517 592M517 592L528 607M517 592L536 582M536 582L543 597M536 582L552 576M552 576L567 571M567 571L577 585M567 571L587 563M587 563L596 576M587 563L603 557M603 557L612 569M603 557L619 548M619 548L636 542M636 542L645 554M654 533L662 549M654 533L668 527M668 527L678 539M668 527L687 519M687 519L694 533M704 514L714 528M704 514L720 505M720 505L731 520M720 505L737 497M737 497L745 512M737 497L755 489M755 489L764 506M192 748L202 764M207 740L218 756M207 740L225 734M225 734L235 748M242 725L249 740M242 725L260 719M260 719L266 733M260 719L275 713M275 713L285 726M275 713L292 705M292 705L300 718M292 705L308 698M308 698L318 713M308 698L324 690M324 690L335 707M324 690L344 682M344 682L350 697M358 678L367 693M358 678L376 670M376 670L386 684M376 670L393 663M393 663L403 675M393 663L409 656M409 656L420 669M409 656L425 649M425 649L436 662M425 649L443 641M443 641L454 655M459 635L469 647M459 635L476 627M476 627L487 641M476 627L493 621M493 621L502 633M493 621L512 611M512 611L520 626M512 611L528 607M528 607L537 621M528 607L543 597M543 597L554 614M543 597L562 593M562 593L570 607M562 593L577 585M577 585L589 598M596 576L602 590M596 576L612 569M612 569L622 585M629 562L638 577M645 554L655 568M645 554L662 549M662 549L672 564M662 549L678 539M678 539L694 533M694 533L706 549M694 533L714 528M714 528L721 540M731 520L745 512M745 512L757 526M745 512L764 506M202 764L209 778M202 764L218 756M218 756L235 748M235 748L242 764M235 748L249 740M249 740L261 754M266 733L276 748M285 726L300 718M300 718L310 734M300 718L318 713M318 713L328 726M318 713L335 707M335 707L346 720M350 697L361 713M350 697L367 693M367 693L386 684M386 684L396 699M386 684L403 675M403 675L412 691M403 675L420 669M420 669L429 683M420 669L436 662M436 662L444 677M454 655L464 668M454 655L469 647M469 647L481 662M469 647L487 641M487 641L502 633M502 633L512 647M502 633L520 626M520 626L531 643M537 621L547 634M537 621L554 614M554 614L563 628M554 614L570 607M570 607L581 621M570 607L589 598M589 598L602 590M602 590L615 606M622 585L629 597M638 577L648 591M638 577L655 568M655 568L665 585M655 568L672 564M672 564L682 576M672 564L687 556M687 556L698 571M687 556L706 549M706 549L721 540M721 540L730 556M721 540L740 536M740 536L750 547M757 526L763 540M757 526L773 521M773 521L782 534M209 778L226 769M226 769L242 764M242 764L261 754M261 754L276 748M276 748L293 742M293 742L310 734M310 734L328 726M328 726L346 720M346 720L361 713M378 704L396 699M396 699L412 691M412 691L429 683M429 683L444 677M444 677L464 668M512 647L531 643M531 643L547 634M547 634L563 628M563 628L581 621M596 614L615 606M615 606L629 597M648 591L665 585M665 585L682 576M698 571L716 564M716 564L730 556M730 556L750 547M750 547L763 540"/>
</g>
<clipPath id="rg1"><polygon points="320,190 330,190 400,275 445,330 545,345 562,455 483,497 440,420 380,330"/></clipPath>
<g clip-path="url(#rg1)" fill="none" stroke="#84a43a" stroke-width="1.1">
<path d="M81 230L92 252M81 230L102 222M102 222L113 242M102 222L116 217M116 217L138 232M116 217L145 214M145 214L150 224M162 199L171 217M162 199L178 192M178 192L187 214M178 192L192 182M192 182L205 204M192 182L212 184M212 184L230 191M212 184L237 174M237 174L240 185M237 174L256 159M256 159L266 181M256 159L269 156M269 156L279 170M269 156L292 151M292 151L297 164M292 151L313 134M328 133L346 120M346 120L359 146M346 120L364 111M364 111L370 130M388 112L399 128M402 97L412 122M402 97L425 92M425 92L433 112M425 92L444 88M444 88L448 97M458 75L468 88M458 75L478 67M478 67L486 90M478 67L491 58M491 58L504 71M491 58L518 47M518 47L520 65M518 47L527 45M527 45L547 59M92 252L113 242M113 242L138 232M138 232L150 224M150 224L157 241M150 224L171 217M171 217L183 233M171 217L187 214M187 214L194 229M187 214L205 204M205 204L215 226M205 204L230 191M230 191L233 213M230 191L240 185M240 185L259 204M240 185L266 181M279 170L290 188M279 170L297 164M297 164L306 180M297 164L314 158M314 158L328 178M314 158L342 153M342 153L353 165M342 153L359 146M370 130L384 146M370 130L399 128M399 128L402 146M399 128L412 122M412 122L420 128M412 122L433 112M433 112L447 126M448 97L468 88M468 88L484 111M486 90L502 104M486 90L504 71M504 71L520 65M520 65L533 90M520 65L547 59M547 59L559 83M104 264L115 287M104 264L130 260M130 260L139 279M130 260L140 248M140 248L158 270M140 248L157 241M157 241L175 264M183 233L189 258M183 233L194 229M194 229L216 241M194 229L215 226M215 226L233 213M233 213L259 204M259 204L271 218M280 197L291 216M280 197L290 188M290 188L299 202M290 188L306 180M306 180L328 178M328 178L344 195M328 178L353 165M353 165L357 177M353 165L362 154M362 154L384 146M384 146L402 162M384 146L402 146M402 146L420 162M402 146L420 128M420 128L439 151M420 128L447 126M447 126L458 139M447 126L467 116M467 116L474 133M467 116L484 111M484 111L502 104M502 104L509 119M502 104L517 89M517 89L523 106M517 89L533 90M533 90L548 103M559 83L570 96M115 287L124 301M115 287L139 279M139 279L150 295M139 279L158 270M158 270L160 290M158 270L175 264M175 264L188 274M175 264L189 258M189 258L216 241M216 241L235 243M235 243L237 255M235 243L250 225M250 225L264 242M250 225L271 218M271 218L291 216M291 216L301 231M299 202L314 227M299 202L324 199M324 199L337 210M324 199L344 195M344 195L357 204M357 177L369 203M357 177L384 169M384 169L389 195M384 169L402 162M402 162L405 188M402 162L420 162M420 162L424 172M420 162L439 151M439 151L446 166M439 151L458 139M458 139L465 164M458 139L474 133M474 133L486 146M474 133L496 130M496 130L500 144M496 130L509 119M509 119L521 138M509 119L523 106M523 106L548 103M548 103L555 124M548 103L570 96M570 96L575 115M124 301L145 321M124 301L150 295M150 295L160 313M150 295L160 290M160 290L174 308M160 290L188 274M188 274L195 300M204 269L212 292M204 269L225 261M225 261L236 281M237 255L264 242M264 242L273 262M264 242L273 240M273 240L301 231M301 231L303 244M314 227L330 236M357 204L364 223M357 204L369 203M369 203L384 212M369 203L389 195M405 188L424 172M424 172L436 190M424 172L446 166M446 166L452 179M465 164L481 180M465 164L486 146M486 146L498 172M486 146L500 144M500 144L518 157M500 144L521 138M521 138L539 123M539 123L551 150M539 123L555 124M555 124L575 115M575 115L584 131M145 321L152 339M145 321L160 313M160 313L170 332M160 313L174 308M174 308L186 326M195 300L212 292M212 292L230 307M236 281L242 294M251 268L260 290M251 268L273 262M273 262L291 252M291 252L299 272M291 252L303 244M303 244L330 236M330 236L336 252M330 236L350 231M350 231L352 250M364 223L377 243M384 212L392 238M384 212L400 213M400 213L413 222M400 213L416 202M416 202L436 190M436 190L455 214M452 179L469 200M452 179L481 180M481 180L482 191M481 180L498 172M498 172L502 191M498 172L518 157M518 157L529 181M518 157L533 153M533 153L539 167M533 153L551 150M551 150L559 167M551 150L572 142M572 142L584 131M584 131L601 147M152 339L167 351M152 339L170 332M170 332L180 342M170 332L186 326M186 326L205 314M205 314L215 326M205 314L230 307M230 307L231 327M230 307L242 294M242 294L252 318M260 290L276 309M287 286L294 303M299 272L322 263M322 263L330 284M322 263L336 252M336 252L351 275M336 252L352 250M352 250L367 262M352 250L377 243M377 243L390 258M377 243L392 238M392 238L413 222M413 222L427 240M413 222L426 223M426 223L440 237M455 214L469 200M469 200L478 218M482 191L492 215M482 191L502 191M502 191L511 208M502 191L529 181M529 181L531 191M529 181L539 167M539 167L558 191M539 167L559 167M559 167L570 180M576 157L591 174M576 157L601 147M167 351L178 373M167 351L180 342M180 342L196 368M180 342L194 332M194 332L208 359M194 332L215 326M215 326L231 327M231 327L243 340M231 327L252 318M252 318L271 329M252 318L276 309M276 309L294 303M294 303L304 310M315 293L330 284M330 284L345 301M351 275L357 296M351 275L367 262M367 262L380 282M367 262L390 258M390 258L401 280M390 258L400 247M400 247L420 272M400 247L427 240M427 240L436 262M440 237L454 252M440 237L465 225M478 218L486 238M478 218L492 215M492 215L511 208M511 208L529 217M531 191L543 207M531 191L558 191M558 191L568 209M558 191L570 180M570 180L586 192M570 180L591 174M591 174L608 192M591 174L606 167M606 167L621 174M178 373L187 389M196 368L204 374M196 368L208 359M208 359L224 366M208 359L232 348M243 340L271 329M286 328L293 339M304 310L316 327M304 310L324 304M324 304L332 330M324 304L345 301M345 301L355 320M345 301L357 296M357 296L380 282M380 282L401 280M401 280L407 289M401 280L420 272M420 272L421 289M420 272L436 262M436 262L450 274M436 262L454 252M454 252L467 268M454 252L477 242M477 242L484 265M477 242L486 238M486 238L499 254M486 238L509 228M509 228L517 245M509 228L529 217M529 217L533 234M529 217L543 207M543 207L555 234M543 207L568 209M568 209L572 224M568 209L586 192M586 192L590 219M608 192L610 200M608 192L621 174M187 389L196 409M187 389L204 374M204 374L213 392M204 374L224 366M224 366L239 360M239 360L256 377M239 360L257 360M257 360L266 377M257 360L280 352M280 352L284 370M280 352L293 339M293 339L304 358M293 339L316 327M316 327L327 354M332 330L339 345M332 330L355 320M355 320L359 336M355 320L368 310M368 310L376 328M368 310L392 303M392 303L397 314M407 289L414 307M407 289L421 289M450 274L458 292M467 268L480 282M467 268L484 265M484 265L490 283M484 265L499 254M499 254L518 272M499 254L517 245M533 234L554 256M533 234L555 234M555 234L570 250M555 234L572 224M590 219L602 230M590 219L610 200M610 200L625 223M610 200L629 202M629 202L642 217M196 409L210 425M196 409L213 392M213 392L219 410M213 392L230 388M230 388L256 377M256 377L266 377M266 377L282 388M266 377L284 370M284 370L298 384M284 370L304 358M304 358L323 371M304 358L327 354M327 354L335 372M327 354L339 345M339 345L352 353M339 345L359 336M359 336L370 354M359 336L376 328M376 328L395 347M376 328L397 314M397 314L411 329M397 314L414 307M414 307L436 307M436 307L447 314M436 307L458 292M458 292L480 282M480 282L484 302M480 282L490 283M490 283L518 272M518 272L527 289M518 272L536 257M536 257L541 274M536 257L554 256M554 256L558 272M554 256L570 250M570 250L583 235M583 235L604 255M583 235L602 230M602 230L625 223M625 223L637 240M625 223L642 217M642 217L657 226M210 425L216 442M210 425L219 410M219 410L231 426M219 410L240 403M240 403L250 420M240 403L262 394M262 394L272 413M262 394L282 388M282 388L293 403M298 384L308 401M298 384L323 371M323 371L329 396M323 371L335 372M335 372L352 380M335 372L352 353M352 353L364 376M370 354L385 366M370 354L395 347M395 347L408 356M395 347L411 329M411 329L422 347M411 329L428 329M428 329L445 345M428 329L447 314M447 314L465 332M447 314L466 310M466 310L481 329M466 310L484 302M484 302L492 323M484 302L501 289M501 289L520 307M501 289L527 289M527 289L540 307M527 289L541 274M541 274L558 272M558 272L569 283M558 272L584 263M584 263L604 255M604 255L613 248M613 248L637 240M637 240L652 261M637 240L657 226M657 226L663 247M216 442L222 456M216 442L231 426M231 426L250 420M250 420L260 439M250 420L272 413M272 413L279 431M293 403L307 422M293 403L308 401M308 401L325 421M308 401L329 396M329 396L352 380M352 380L363 405M364 376L383 387M385 366L390 382M385 366L408 356M408 356L415 376M408 356L422 347M422 347L429 370M422 347L445 345M445 345L454 362M445 345L465 332M465 332L481 329M481 329L492 340M492 323L507 333M492 323L520 307M520 307L522 332M520 307L540 307M540 307L544 319M540 307L554 296M554 296L562 314M554 296L569 283M569 283L590 284M590 284L597 302M590 284L606 272M606 272L616 292M606 272L626 266M626 266L640 280M626 266L652 261M652 261L663 247M663 247L679 266M222 456L250 452M250 452L259 461M250 452L260 439M260 439L276 459M260 439L279 431M279 431L295 450M279 431L307 422M325 421L338 435M325 421L344 405M344 405L354 430M344 405L363 405M363 405L369 415M363 405L383 387M383 387L386 407M383 387L390 382M390 382L405 399M390 382L415 376M415 376L422 393M429 370L442 384M454 362L465 376M454 362L471 353M471 353L486 373M471 353L492 340M492 340L507 333M507 333L516 349M507 333L522 332M522 332L544 319M544 319L551 342M544 319L562 314M579 307L595 319M579 307L597 302M597 302L616 292M616 292L630 303M616 292L640 280M640 280L649 301M640 280L656 272M656 272L666 286M656 272L679 266M239 470L245 484M239 470L259 461M259 461L274 481M259 461L276 459M276 459L290 475M276 459L295 450M295 450L311 464M295 450L314 438M314 438L323 460M314 438L338 435M354 430L365 443M369 415L381 439M369 415L386 407M386 407L399 429M386 407L405 399M405 399L417 414M405 399L422 393M422 393L442 384M442 384L450 400M465 376L470 394M486 373L496 390M486 373L499 366M499 366L516 377M499 366L516 349M516 349L532 375M516 349L544 340M544 340L551 342M551 342L563 360M551 342L570 332M570 332L595 319M595 319L609 341M610 319L623 334M610 319L630 303M630 303L647 324M649 301L662 320M649 301L666 286M666 286L677 305M666 286L691 278M691 278L693 304M245 484L262 509M245 484L274 481M274 481L277 495M274 481L290 475M290 475L298 495M290 475L311 464M311 464L323 460M323 460L335 479M323 460L338 449M338 449L365 443M365 443L368 462M381 439L395 451M381 439L399 429M399 429L413 441M399 429L417 414M417 414L425 434M417 414L436 407M436 407L445 430M436 407L450 400M450 400L467 421M450 400L470 394M470 394L491 415M470 394L496 390M496 390L507 409M496 390L516 377M516 377L528 398M516 377L532 375M532 375L540 388M532 375L548 368M548 368L563 383M548 368L563 360M563 360L583 375M563 360L591 352M591 352L599 361M591 352L609 341M609 341L618 352M609 341L623 334M623 334L636 344M647 324L648 345M677 305L686 328M677 305L693 304M693 304L713 312M262 509L276 528M262 509L277 495M277 495L292 513M277 495L298 495M298 495L304 503M298 495L315 482M315 482L327 503M315 482L335 479M335 479L348 489M335 479L350 471M350 471L369 479M350 471L368 462M368 462L395 451M395 451L413 441M413 441L425 457M413 441L425 434M425 434L435 452M425 434L445 430M445 430L457 445M445 430L467 421M467 421L478 439M467 421L491 415M491 415L501 427M491 415L507 409M507 409L516 416M507 409L528 398M528 398L531 408M528 398L540 388M540 388L556 403M540 388L563 383M563 383L574 401M583 375L599 361M618 352L626 368M618 352L636 344M636 344L650 367M636 344L648 345M648 345L669 361M648 345L676 330M676 330L686 353M676 330L686 328M686 328L704 341M686 328L713 312M276 528L292 513M292 513L298 532M292 513L304 503M304 503L325 525M327 503L343 516M327 503L348 489M348 489L359 506M369 479L385 473M385 473L390 492M397 465L425 457M425 457L430 482M425 457L435 452M435 452L455 466M435 452L457 445M457 445L478 439M478 439L494 456M478 439L501 427M501 427L506 446M516 416L528 439M516 416L531 408M531 408L556 403M556 403L564 417M556 403L574 401M574 401L580 409M588 386L600 401M588 386L606 381M606 381L626 368M626 368L650 367M650 367L653 386M669 361L676 372M669 361L686 353M686 353L699 361M686 353L704 341M704 341L712 360M704 341L724 338M279 537L298 556M279 537L298 532M298 532L315 546M298 532L325 525M325 525L337 547M325 525L343 516M343 516L346 537M343 516L359 506M359 506L367 521M359 506L378 499M378 499L384 521M378 499L390 492M390 492L406 511M430 482L455 466M455 466L466 486M455 466L473 466M473 466L479 483M494 456L502 474M494 456L506 446M506 446L522 463M506 446L528 439M528 439L534 450M528 439L541 434M541 434L558 450M541 434L564 417M564 417L579 444M564 417L580 409M580 409L593 431M580 409L600 401M600 401L617 418M600 401L620 396M620 396L629 416M620 396L642 393M642 393L650 408M642 393L653 386M653 386L664 399M653 386L676 372M676 372L683 390M699 361L702 381M712 360L726 374M712 360L728 350M298 556L307 573M298 556L315 546M315 546L321 566M315 546L337 547M337 547L345 554M337 547L346 537M346 537L363 546M346 537L367 521M367 521L384 540M384 521L402 530M384 521L406 511M406 511L417 525M406 511L421 499M421 499L439 522M421 499L442 495M442 495L450 506M442 495L466 486M479 483L491 494M479 483L502 474M502 474L509 489M522 463L528 476M522 463L534 450M534 450L548 477M534 450L558 450M558 450L579 444M579 444L590 455M579 444L593 431M593 431L603 451M593 431L617 418M617 418L618 443M617 418L629 416M629 416L638 434M650 408L660 427M650 408L664 399M664 399L674 418M664 399L683 390M683 390L702 403M683 390L702 381M702 381L718 398M726 374L738 398M726 374L739 367M739 367L748 384M307 573L316 598M307 573L321 566M321 566L340 579M321 566L345 554M345 554L350 575M345 554L363 546M363 546L376 572M363 546L384 540M402 530L417 525M417 525L430 542M417 525L439 522M439 522L450 539M439 522L450 506M450 506L471 525M450 506L476 503M476 503L479 519M476 503L491 494M491 494L500 511M491 494L509 489M509 489L517 506M509 489L528 476M528 476L548 477M548 477L555 490M570 466L590 455M603 451L611 464M603 451L618 443M618 443L637 457M638 434L652 454M638 434L660 427M660 427L674 418M674 418L690 431M674 418L702 403M702 403L707 423M718 398L729 417M718 398L738 398M738 398L746 411M748 384L769 404M316 598L340 579M340 579L348 606M340 579L350 575M350 575L363 594M350 575L376 572M376 572L386 583M376 572L392 565M392 565L413 557M413 557L419 573M430 542L438 558M430 542L450 539M450 539L471 525M471 525L479 519M479 519L495 537M479 519L500 511M500 511L516 530M500 511L517 506M517 506L534 521M540 494L556 518M540 494L555 490M555 490L574 509M555 490L573 485M573 485L593 495M594 478L613 487M594 478L611 464M611 464L622 482M611 464L637 457M637 457L641 471M637 457L652 454M652 454L665 462M652 454L668 445M668 445L681 457M668 445L690 431M690 431L706 446M690 431L707 423M707 423L720 442M729 417L746 411M746 411L756 425M769 404L777 419M348 606L358 618M348 606L363 594M363 594L372 612M363 594L386 583M386 583L393 606M386 583L400 579M400 579L409 595M419 573L438 558M438 558L454 580M438 558L459 555M459 555L470 575M459 555L482 551M482 551L485 568M482 551L495 537M495 537L516 530M516 530L521 541M516 530L534 521M534 521L540 539M534 521L556 518M556 518L560 534M556 518L574 509M574 509L577 525M593 495L605 517M593 495L613 487M613 487L624 511M613 487L622 482M622 482L642 494M622 482L641 471M641 471L656 489M641 471L665 462M665 462L674 486M665 462L681 457M681 457L706 446M706 446L708 462M706 446L720 442M720 442L734 463M735 433L745 447M735 433L756 425M756 425L764 449M756 425L777 419M777 419L782 436M338 625L354 639M338 625L358 618M358 618L370 633M358 618L372 612M372 612L393 606M393 606L409 595M409 595L424 617M409 595L430 588M430 588L444 609M430 588L454 580M454 580L463 590M454 580L470 575M470 575L475 593M470 575L485 568M506 556L522 570M506 556L521 541M521 541L539 565M521 541L540 539M540 539L550 556M540 539L560 534M560 534L579 548M560 534L577 525M577 525L596 535M577 525L605 517M605 517L610 532M605 517L624 511M624 511L630 528M624 511L642 494M642 494L648 517M656 489L667 510M674 486L687 499M674 486L696 472M696 472L702 496M696 472L708 462M708 462L734 463M734 463L739 482M745 447L764 449M764 449L782 436M782 436L801 450M370 633L388 627M388 627L402 624M424 617L444 609M463 590L475 593M475 593L501 583M501 583L522 570M522 570L539 565M539 565L550 556M550 556L579 548M579 548L596 535M596 535L610 532M610 532L630 528M630 528L648 517M648 517L667 510M667 510L687 499M687 499L702 496M702 496L722 487M722 487L739 482M739 482L757 468M757 468L778 465M778 465L801 450"/>
</g>
<clipPath id="rg2"><polygon points="170,560 250,560 340,590 320,640 170,676"/></clipPath>
<g clip-path="url(#rg2)" fill="none" stroke="#84a43a" stroke-width="1.1">
<path d="M24 539L54 530M83 519L106 504M106 504L142 496M142 496L171 480M171 480L181 510M196 471L212 497M196 471L226 463M251 450L271 479M251 450L282 445M282 445L301 462M40 555L68 545M68 545L92 541M122 524L157 520M157 520L181 510M181 510L195 528M212 497L227 514M212 497L238 489M238 489L271 479M301 462L309 489M301 462L326 450M49 577L80 572M80 572L93 597M106 562L122 585M106 562L138 548M138 548L157 576M170 539L195 528M195 528L212 553M258 503L272 533M309 489L340 477M63 599L80 630M122 585L138 602M122 585L157 576M157 576L181 560M181 560L212 553M212 553L223 569M237 543L259 563M237 543L272 533M272 533L283 550M272 533L294 523M294 523L314 545M357 502L367 524M80 630L92 648M80 630L111 614M111 614L138 602M138 602L165 591M165 591L184 619M198 588L208 606M283 550L302 578M314 545L331 564M341 530L367 524M367 524L385 541M92 648L110 667M127 634L138 665M156 631L184 619M184 619L208 606M208 606L223 626M238 599L257 621M268 585L283 610M268 585L302 578M302 578L331 564M331 564L356 556M356 556L370 578M110 667L127 695M110 667L138 665M172 651L197 638M197 638L223 626M223 626L239 652M223 626L257 621M257 621L283 610M283 610L300 633M283 610L315 599M343 589L370 578M152 687L168 705M152 687L184 673M184 673L195 698M184 673L208 662M208 662L230 684M239 652L257 675M269 643L286 660M269 643L300 633M326 621L343 641M326 621L358 612M358 612L372 634M358 612L384 601M384 601L401 623M384 601L417 590M417 590L425 607M143 720L168 705M168 705L181 729M168 705L195 698M195 698L213 712M195 698L230 684M230 684L240 704M230 684L257 675M257 675L266 692M286 660L297 682M343 641L356 663M372 634L386 654M401 623L412 647M154 739L167 759M154 739L181 729M181 729L194 753M181 729L213 712M213 712L225 735M213 712L240 704M240 704L266 692M266 692L285 717M266 692L297 682M297 682L314 712M325 670L356 663M356 663L374 688M412 647L430 666M439 632L462 659M167 759L184 781M194 753L215 767M194 753L225 735M256 725L285 717M285 717L300 744M285 717L314 712M314 712L345 696M345 696L374 688M374 688L389 708M374 688L399 673M399 673L418 702M399 673L430 666M430 666L444 686M430 666L462 659M462 659L476 677M184 781L197 803M184 781L215 767M215 767L238 762M238 762L271 748M271 748L300 744M300 744L313 761M300 744L327 729M389 708L398 735M389 708L418 702M418 702L444 686M444 686L476 677M254 784L281 774M281 774L313 761M344 755L367 742M367 742L398 735M398 735L431 718M431 718L456 707"/>
</g>
<clipPath id="rg3"><polygon points="548,345 600,305 625,255 680,240 740,255 860,215 880,250 850,300 800,350 760,380 700,430 621,444 568,459"/></clipPath>
<g clip-path="url(#rg3)" fill="none" stroke="#84a43a" stroke-width="1.1">
<path d="M356 227L372 220M372 220L381 235M372 220L387 215M387 215L397 230M387 215L400 209M400 209L415 202M415 202L424 217M415 202L430 195M430 195L441 211M446 191L457 203M446 191L460 182M460 182L470 198M460 182L477 178M477 178L484 191M477 178L492 170M492 170L499 183M492 170L508 163M508 163L514 179M508 163L523 157M523 157L535 150M535 150L545 166M535 150L551 146M551 146L559 159M551 146L565 139M565 139L575 154M565 139L582 132M582 132L591 147M582 132L596 125M596 125L604 140M610 119L620 135M610 119L627 113M627 113L636 126M627 113L640 108M656 100L664 114M656 100L672 95M672 95L685 88M685 88L693 102M701 83L709 96M701 83L717 75M717 75L726 90M717 75L732 68M732 68L740 83M774 51L786 65M774 51L792 44M807 37L813 52M366 242L373 254M366 242L381 235M381 235L389 248M381 235L397 230M397 230L404 241M397 230L411 223M411 223L418 235M411 223L424 217M424 217L433 229M441 211L448 225M457 203L465 216M484 191L494 203M484 191L499 183M499 183L510 200M499 183L514 179M514 179L524 192M514 179L529 171M529 171L545 166M545 166L554 178M545 166L559 159M559 159L570 172M575 154L582 168M575 154L591 147M591 147L599 159M591 147L604 140M604 140L614 152M620 135L629 149M620 135L636 126M636 126L645 142M636 126L649 120M649 120L658 134M649 120L664 114M664 114L673 129M664 114L680 107M680 107L689 123M680 107L693 102M693 102L703 114M693 102L709 96M709 96L720 111M726 90L735 104M726 90L740 83M740 83L750 97M740 83L755 75M755 75L763 90M755 75L771 71M771 71L778 82M771 71L786 65M786 65L792 77M786 65L799 57M799 57L808 72M799 57L813 52M813 52L825 64M373 254L385 270M373 254L389 248M389 248L400 262M389 248L404 241M404 241L418 235M418 235L427 249M418 235L433 229M433 229L444 245M448 225L459 237M448 225L465 216M465 216L474 232M465 216L478 210M478 210L494 203M494 203L504 219M494 203L510 200M510 200L519 212M510 200L524 192M524 192L532 206M524 192L538 184M538 184L554 178M554 178L564 192M554 178L570 172M570 172L578 188M570 172L582 168M582 168L594 179M599 159L614 152M614 152L624 168M614 152L629 149M629 149L637 162M629 149L645 142M645 142L654 155M645 142L658 134M658 134L673 129M673 129L689 123M689 123L699 136M689 123L703 114M703 114L713 130M720 111L727 124M720 111L735 104M735 104L744 115M750 97L757 109M750 97L763 90M763 90L772 104M763 90L778 82M778 82L786 97M778 82L792 77M792 77L801 92M792 77L808 72M808 72L817 84M808 72L825 64M825 64L832 80M385 270L400 262M400 262L407 276M400 262L412 255M412 255L422 268M412 255L427 249M427 249L437 262M427 249L444 245M444 245L450 258M459 237L466 250M487 225L496 238M487 225L504 219M504 219L519 212M519 212L526 225M519 212L532 206M532 206L541 218M548 200L558 212M548 200L564 192M564 192L578 188M578 188L588 200M578 188L594 179M594 179L602 194M594 179L607 172M607 172L617 188M607 172L624 168M624 168L637 162M637 162L646 176M637 162L654 155M654 155L662 169M654 155L667 148M667 148L678 161M667 148L681 140M699 136L708 148M699 136L713 130M713 130L720 142M727 124L735 136M727 124L744 115M744 115L757 109M757 109L767 125M772 104L786 97M786 97L797 110M801 92L812 106M832 80L841 92M392 284L403 297M392 284L407 276M407 276L415 289M407 276L422 268M422 268L431 283M422 268L437 262M437 262L445 276M437 262L450 258M450 258L462 269M466 250L476 264M466 250L483 244M483 244L489 257M483 244L496 238M496 238L506 252M496 238L512 232M512 232L519 247M512 232L526 225M526 225L541 218M541 218L550 232M541 218L558 212M558 212L564 227M558 212L572 207M572 207L580 219M572 207L588 200M588 200L595 215M602 194L612 206M602 194L617 188M617 188L624 202M617 188L632 181M632 181L641 195M632 181L646 176M646 176L654 187M646 176L662 169M662 169L671 182M678 161L684 177M692 157L701 170M692 157L708 148M708 148L714 164M708 148L720 142M720 142L729 158M720 142L735 136M735 136L745 149M735 136L750 130M750 130L760 145M767 125L774 136M767 125L780 118M780 118L790 130M780 118L797 110M797 110L804 124M812 106L818 117M825 100L834 111M825 100L841 92M841 92L851 105M403 297L410 308M415 289L431 283M445 276L456 291M445 276L462 269M462 269L476 264M476 264L489 257M489 257L501 271M489 257L506 252M506 252L515 266M506 252L519 247M519 247L537 240M537 240L545 254M537 240L550 232M550 232L559 247M550 232L564 227M564 227L575 240M580 219L589 233M580 219L595 215M595 215L603 226M595 215L612 206M612 206L618 222M612 206L624 202M624 202L634 213M624 202L641 195M641 195L654 187M654 187L666 202M654 187L671 182M671 182L678 194M671 182L684 177M684 177L694 189M684 177L701 170M701 170L708 182M701 170L714 164M714 164L723 178M714 164L729 158M729 158L741 170M745 149L753 165M745 149L760 145M774 136L782 150M774 136L790 130M790 130L799 144M790 130L804 124M804 124L818 117M818 117L834 111M834 111L842 125M834 111L851 105M851 105L857 118M410 308L418 322M410 308L424 302M424 302L439 295M439 295L450 311M439 295L456 291M456 291L464 305M456 291L469 284M469 284L486 277M486 277L495 290M486 277L501 271M501 271L509 286M501 271L515 266M515 266L522 280M515 266L529 259M529 259L540 273M529 259L545 254M545 254L554 267M545 254L559 247M559 247L567 260M575 240L583 254M575 240L589 233M589 233L599 248M589 233L603 226M603 226L614 242M603 226L618 222M618 222L629 235M618 222L634 213M634 213L642 226M634 213L648 209M648 209L657 221M648 209L666 202M666 202L672 216M666 202L678 194M678 194L694 189M708 182L718 195M708 182L723 178M723 178L734 191M723 178L741 170M741 170L748 184M741 170L753 165M753 165L763 176M753 165L768 157M768 157L779 170M768 157L782 150M782 150L799 144M799 144L808 157M799 144L813 138M813 138L824 153M827 131L838 145M827 131L842 125M842 125L852 140M842 125L857 118M857 118L868 133M418 322L428 336M418 322L434 317M434 317L442 330M434 317L450 311M450 311L458 324M450 311L464 305M464 305L473 316M478 297L486 311M478 297L495 290M495 290L503 306M495 290L509 286M509 286L518 298M509 286L522 280M522 280L532 292M540 273L547 285M540 273L554 267M554 267L564 279M567 260L579 275M567 260L583 254M583 254L591 267M583 254L599 248M599 248L608 262M599 248L614 242M614 242L629 235M629 235L636 249M629 235L642 226M642 226L651 242M642 226L657 221M657 221L672 216M672 216L683 228M688 209L698 223M703 203L713 217M703 203L718 195M718 195L734 191M734 191L742 202M734 191L748 184M748 184L755 197M748 184L763 176M763 176L772 190M779 170L786 184M779 170L791 164M791 164L801 179M791 164L808 157M808 157L824 153M824 153L833 164M838 145L848 160M838 145L852 140M852 140L863 152M852 140L868 133M868 133L876 146M428 336L438 351M428 336L442 330M442 330L451 344M442 330L458 324M458 324L466 336M458 324L473 316M473 316L480 332M473 316L486 311M486 311L496 326M486 311L503 306M503 306L518 298M518 298L526 311M532 292L541 308M532 292L547 285M547 285L558 301M564 279L572 295M564 279L579 275M579 275L588 287M579 275L591 267M591 267L602 279M591 267L608 262M608 262L617 274M622 254L632 268M622 254L636 249M636 249L645 260M636 249L651 242M651 242L662 254M651 242L666 235M666 235L676 248M666 235L683 228M683 228L690 243M683 228L698 223M698 223L707 235M698 223L713 217M713 217L721 229M713 217L726 211M726 211L736 223M726 211L742 202M742 202L755 197M755 197L765 212M755 197L772 190M772 190L786 184M786 184L797 200M786 184L801 179M801 179L810 191M801 179L815 173M815 173L824 184M815 173L833 164M833 164L848 160M848 160L854 172M863 152L870 168M863 152L876 146M876 146L886 160M438 351L445 364M438 351L451 344M451 344L460 357M466 336L474 351M466 336L480 332M480 332L492 344M496 326L510 318M510 318L521 331M526 311L534 325M526 311L541 308M541 308L550 320M558 301L566 314M558 301L572 295M572 295L581 305M572 295L588 287M588 287L602 279M602 279L611 294M602 279L617 274M617 274L625 286M632 268L640 283M645 260L662 254M662 254L671 268M662 254L676 248M676 248L683 261M676 248L690 243M690 243L700 257M690 243L707 235M707 235L716 250M707 235L721 229M721 229L736 223M736 223L744 237M736 223L750 216M750 216L758 232M750 216L765 212M765 212L774 226M780 204L797 200M797 200L803 211M797 200L810 191M810 191L820 206M810 191L824 184M824 184L833 198M824 184L840 178M840 178L849 193M840 178L854 172M870 168L880 178M870 168L886 160M886 160L893 174M445 364L456 378M445 364L460 357M460 357L470 371M460 357L474 351M474 351L483 364M474 351L492 344M521 331L534 325M534 325L550 320M550 320L560 335M550 320L566 314M566 314L573 325M566 314L581 305M581 305L594 301M594 301L604 313M594 301L611 294M611 294L620 309M625 286L634 301M625 286L640 283M640 283L650 295M640 283L656 276M656 276L665 288M656 276L671 268M671 268L678 283M671 268L683 261M683 261L693 278M683 261L700 257M700 257L708 269M700 257L716 250M716 250L723 263M716 250L730 244M730 244L744 237M744 237L752 250M758 232L767 246M758 232L774 226M774 226L782 237M774 226L790 217M790 217L797 231M790 217L803 211M803 211L814 227M803 211L820 206M820 206L829 221M820 206L833 198M833 198L844 212M833 198L849 193M849 193L857 208M849 193L864 185M864 185L874 198M880 178L888 193M880 178L893 174M893 174L902 187M456 378L462 390M470 371L477 384M470 371L483 364M483 364L501 359M501 359L510 371M514 351L522 367M514 351L529 346M529 346L539 359M529 346L544 339M544 339L551 353M544 339L560 335M560 335L567 348M560 335L573 325M573 325L582 340M573 325L588 320M588 320L599 333M588 320L604 313M604 313L612 329M620 309L628 320M634 301L641 314M650 295L665 288M665 288L673 304M665 288L678 283M678 283L687 295M678 283L693 278M693 278L708 269M708 269L717 284M708 269L723 263M723 263L739 259M739 259L746 272M739 259L752 250M752 250L764 265M752 250L767 246M767 246L782 237M782 237L797 231M797 231L809 247M797 231L814 227M814 227L822 238M829 221L837 233M829 221L844 212M844 212L853 225M844 212L857 208M857 208L874 198M874 198L883 214M874 198L888 193M888 193L897 207M888 193L902 187M902 187L911 200M462 390L477 384M477 384L486 399M494 377L510 371M510 371L515 386M510 371L522 367M522 367L531 381M539 359L551 353M551 353L561 366M567 348L575 360M567 348L582 340M582 340L592 354M582 340L599 333M599 333L612 329M612 329L628 320M628 320L637 336M628 320L641 314M641 314L652 328M659 308L668 322M659 308L673 304M673 304L682 316M673 304L687 295M687 295L697 309M687 295L704 290M704 290L710 303M704 290L717 284M717 284L725 298M717 284L732 276M732 276L741 290M732 276L746 272M746 272L756 286M764 265L771 277M764 265L779 256M779 256L787 272M779 256L791 252M791 252L803 264M791 252L809 247M809 247L816 260M809 247L822 238M822 238L832 254M837 233L853 225M853 225L860 239M853 225L868 221M868 221L883 214M883 214L892 227M883 214L897 207M897 207L907 221M897 207L911 200M911 200L920 215M486 399L496 413M486 399L501 391M501 391L510 406M501 391L515 386M515 386L524 399M515 386L531 381M531 381L540 394M531 381L548 375M548 375L556 386M548 375L561 366M561 366L569 380M561 366L575 360M575 360L592 354M592 354L600 367M592 354L606 348M606 348L616 362M606 348L622 342M622 342L629 354M622 342L637 336M637 336L652 328M652 328L661 341M652 328L668 322M668 322L674 337M668 322L682 316M682 316L690 329M682 316L697 309M697 309L704 325M697 309L710 303M710 303L720 317M725 298L735 310M741 290L751 306M741 290L756 286M756 286L764 297M756 286L771 277M771 277L787 272M787 272L793 287M787 272L803 264M803 264L816 260M816 260L824 274M832 254L840 265M832 254L844 246M844 246L853 260M844 246L860 239M860 239L870 255M860 239L877 234M877 234L883 248M877 234L892 227M892 227L899 241M892 227L907 221M907 221L920 215M920 215L930 230M482 417L488 432M496 413L506 427M496 413L510 406M524 399L536 415M524 399L540 394M540 394L549 405M540 394L556 386M556 386L569 380M569 380L586 373M586 373L595 387M586 373L600 367M600 367L610 380M600 367L616 362M616 362L624 376M616 362L629 354M629 354L640 368M629 354L645 349M645 349L653 362M645 349L661 341M661 341L669 356M661 341L674 337M674 337L683 349M674 337L690 329M690 329L700 345M690 329L704 325M704 325L720 317M720 317L735 310M735 310L745 323M735 310L751 306M751 306L759 318M751 306L764 297M764 297L774 311M764 297L781 291M781 291L788 306M781 291L793 287M793 287L810 280M810 280L818 292M810 280L824 274M824 274L832 287M824 274L840 265M840 265L849 279M840 265L853 260M853 260L864 274M853 260L870 255M870 255L878 266M870 255L883 248M883 248L893 260M883 248L899 241M899 241L907 254M913 234L922 248M913 234L930 230M930 230L938 240M488 432L506 427M506 427L514 440M506 427L519 418M519 418L528 432M519 418L536 415M536 415L543 426M549 405L560 419M549 405L566 400M566 400L574 416M566 400L581 394M581 394L589 409M581 394L595 387M595 387L602 403M595 387L610 380M610 380L618 396M624 376L634 388M624 376L640 368M640 368L649 384M640 368L653 362M653 362L669 356M669 356L679 369M669 356L683 349M683 349L694 363M700 345L709 356M700 345L712 337M712 337L723 352M730 329L737 344M730 329L745 323M745 323L759 318M759 318L766 330M759 318L774 311M774 311L782 327M774 311L788 306M788 306L804 299M804 299L812 314M804 299L818 292M832 287L843 299M832 287L849 279M849 279L859 294M849 279L864 274M864 274L873 288M864 274L878 266M878 266L886 282M878 266L893 260M893 260L903 274M893 260L907 254M907 254L922 248M922 248L934 262M922 248L938 240M499 444L514 440M514 440L523 452M528 432L538 446M528 432L543 426M543 426L553 442M560 419L568 435M560 419L574 416M574 416L582 426M574 416L589 409M589 409L596 420M602 403L612 415M618 396L627 410M618 396L634 388M634 388L649 384M662 376L670 389M662 376L679 369M679 369L686 383M694 363L701 377M709 356L717 370M709 356L723 352M723 352L732 364M723 352L737 344M737 344L746 359M737 344L753 337M753 337L761 350M766 330L775 346M782 327L798 320M798 320L806 332M798 320L812 314M812 314L820 327M812 314L826 306M826 306L837 319M826 306L843 299M843 299L852 313M843 299L859 294M859 294L868 308M873 288L880 302M886 282L895 294M886 282L903 274M903 274L911 287M903 274L918 267M918 267L925 283M918 267L934 262M934 262L940 276M934 262L947 256M947 256L958 268M507 458L515 474M507 458L523 452M523 452L531 467M538 446L547 459M538 446L553 442M568 435L575 449M568 435L582 426M582 426L592 442M582 426L596 420M596 420L604 436M596 420L612 415M612 415L622 428M612 415L627 410M627 410L637 422M627 410L641 402M641 402L650 415M641 402L657 394M657 394L665 408M657 394L670 389M670 389L680 404M670 389L686 383M701 377L711 390M701 377L717 370M717 370L726 384M717 370L732 364M732 364L746 359M746 359L755 372M746 359L761 350M761 350L772 364M775 346L787 357M775 346L793 340M793 340L806 332M806 332L816 348M806 332L820 327M820 327L831 339M820 327L837 319M837 319L846 333M852 313L859 328M868 308L876 321M868 308L880 302M880 302L891 316M880 302L895 294M895 294L905 309M895 294L911 287M911 287L925 283M925 283L935 296M940 276L950 288M940 276L958 268M515 474L524 488M515 474L531 467M531 467L539 479M531 467L547 459M547 459L554 475M547 459L560 453M560 453L569 466M560 453L575 449M575 449L583 460M575 449L592 442M592 442L600 455M592 442L604 436M604 436L615 449M604 436L622 428M622 428L628 443M637 422L644 437M637 422L650 415M650 415L661 431M650 415L665 408M665 408L673 424M665 408L680 404M680 404L696 398M696 398L703 410M696 398L711 390M711 390L726 384M726 384L736 399M742 378L750 393M742 378L755 372M772 364L787 357M787 357L795 372M800 352L816 348M816 348L823 359M816 348L831 339M831 339L838 354M831 339L846 333M846 333L859 328M859 328L870 341M859 328L876 321M876 321L885 335M891 316L897 328M891 316L905 309M905 309L914 323M905 309L921 303M921 303L928 316M921 303L935 296M935 296L944 308M935 296L950 288M950 288L960 301M950 288L964 283M964 283L975 295M524 488L532 499M524 488L539 479M539 479L550 496M539 479L554 475M554 475L562 488M554 475L569 466M569 466L579 482M569 466L583 460M583 460L593 475M583 460L600 455M600 455L608 470M615 449L623 464M615 449L628 443M628 443L644 437M644 437L654 450M644 437L661 431M661 431L667 444M661 431L673 424M673 424L682 438M673 424L691 418M691 418L699 432M691 418L703 410M703 410L714 424M703 410L718 403M718 403L728 418M736 399L745 410M736 399L750 393M750 393L760 404M765 384L772 398M778 378L790 392M778 378L795 372M795 372L803 387M795 372L809 366M809 366L817 380M809 366L823 359M823 359L833 374M823 359L838 354M838 354L849 368M854 346L862 360M854 346L870 341M870 341L877 356M870 341L885 335M885 335L893 349M897 328L907 341M897 328L914 323M914 323L928 316M928 316L936 329M928 316L944 308M944 308L960 301M960 301L967 316M960 301L975 295M975 295L983 311M532 499L542 513M532 499L550 496M550 496L557 507M550 496L562 488M562 488L573 500M562 488L579 482M579 482L587 494M593 475L604 489M593 475L608 470M608 470L616 484M608 470L623 464M623 464L631 476M623 464L638 455M638 455L649 470M638 455L654 450M654 450L663 463M654 450L667 444M667 444L676 457M667 444L682 438M699 432L714 424M714 424L722 439M714 424L728 418M728 418L738 432M745 410L753 425M745 410L760 404M760 404L766 419M760 404L772 398M772 398L790 392M790 392L798 406M790 392L803 387M803 387L812 400M803 387L817 380M833 374L849 368M849 368L858 381M849 368L862 360M862 360L873 375M862 360L877 356M877 356L887 368M877 356L893 349M893 349L901 362M893 349L907 341M907 341L924 336M924 336L936 329M936 329L947 342M936 329L954 322M954 322L961 336M954 322L967 316M967 316L977 330M967 316L983 311M983 311L992 325M542 513L551 528M542 513L557 507M557 507L568 521M573 500L582 516M573 500L587 494M587 494L604 489M604 489L616 484M616 484L628 496M616 484L631 476M631 476L640 490M649 470L656 484M649 470L663 463M663 463L671 477M676 457L687 470M691 450L701 466M691 450L707 443M707 443L715 458M707 443L722 439M722 439L731 452M738 432L745 447M753 425L760 437M753 425L766 419M766 419L775 432M766 419L782 413M782 413L798 406M798 406L806 420M798 406L812 400M812 400L827 392M827 392L835 408M827 392L843 388M843 388L852 401M843 388L858 381M858 381L873 375M873 375L880 387M873 375L887 368M887 368L894 382M887 368L901 362M901 362L912 376M915 355L925 369M932 350L940 364M932 350L947 342M947 342L961 336M961 336L971 351M961 336L977 330M977 330L985 343M977 330L992 325M992 325L1000 336M551 528L562 541M551 528L568 521M568 521L577 534M568 521L582 516M582 516L590 528M582 516L595 509M595 509L610 503M628 496L640 490M640 490L650 503M640 490L656 484M656 484L665 497M656 484L671 477M671 477L687 470M687 470L696 485M701 466L709 479M701 466L715 458M715 458L726 472M715 458L731 452M731 452L739 466M745 447L760 437M760 437L775 432M775 432L785 445M789 426L798 438M806 420L814 434M806 420L820 413M820 413L829 426M820 413L835 408M835 408L846 422M835 408L852 401M852 401L858 416M852 401L865 395M865 395L875 409M865 395L880 387M880 387L890 403M880 387L894 382M894 382L905 396M894 382L912 376M912 376L918 390M912 376L925 369M925 369L934 383M925 369L940 364M940 364L949 377M940 364L955 357M955 357L964 369M955 357L971 351M971 351L978 362M971 351L985 343M985 343L994 356M985 343L1000 336M1000 336L1009 350M562 541L577 534M590 528L598 543M590 528L605 521M605 521L614 536M619 517L630 531M619 517L634 509M634 509L644 523M634 509L650 503M650 503L660 515M650 503L665 497M665 497L674 511M665 497L681 490M681 490L687 504M681 490L696 485M696 485L704 499M696 485L709 479M709 479L718 493M709 479L726 472M726 472L739 466M739 466L755 457M755 457L768 454M768 454L778 467M768 454L785 445M785 445L793 460M785 445L798 438M798 438L809 454M798 438L814 434M814 434L823 447M814 434L829 426M829 426L838 441M829 426L846 422M846 422L854 434M858 416L870 428M858 416L875 409M875 409L883 421M875 409L890 403M890 403L898 417M890 403L905 396M905 396L914 410M905 396L918 390M918 390L928 402M934 383L942 396M934 383L949 377M949 377L959 391M964 369L972 384M978 362L989 377M994 356L1002 370M1009 350L1016 363M569 555L580 569M569 555L584 550M584 550L594 563M584 550L598 543M598 543L609 556M598 543L614 536M614 536L623 550M614 536L630 531M630 531L639 543M630 531L644 523M644 523L654 536M660 515L674 511M674 511L684 523M674 511L687 504M687 504L697 516M704 499L714 513M704 499L718 493M718 493L728 505M718 493L734 485M734 485L750 477M750 477L758 492M750 477L764 473M764 473L772 486M764 473L778 467M778 467L793 460M793 460L803 475M793 460L809 454M823 447L838 441M854 434L864 448M854 434L870 428M870 428L883 421M883 421L898 417M898 417L914 410M914 410L928 402M928 402L942 396M942 396L951 408M959 391L965 404M959 391L972 384M972 384L981 399M972 384L989 377M989 377L996 392M1002 370L1011 383M1002 370L1016 363M1016 363L1028 377M580 569L588 581M580 569L594 563M594 563L600 577M609 556L623 550M623 550L633 562M623 550L639 543M639 543L654 536M654 536L662 552M668 530L676 546M668 530L684 523M684 523L692 536M684 523L697 516M697 516L705 532M714 513L723 524M714 513L728 505M728 505L736 519M728 505L744 500M744 500L750 513M744 500L758 492M758 492L772 486M772 486L781 500M772 486L787 479M787 479L796 494M787 479L803 475M803 475L810 488M803 475L816 467M816 467L831 459M831 459L842 474M831 459L848 454M848 454L864 448M864 448L873 462M876 441L886 454M876 441L892 437M892 437L909 429M909 429L922 421M922 421L930 436M938 415L948 431M951 408L961 423M965 404L976 418M965 404L981 399M981 399L990 411M981 399L996 392M996 392L1011 383M1011 383L1028 377M1028 377L1034 391M588 581L596 596M588 581L600 577M600 577L618 571M618 571L624 584M633 562L647 557M647 557L656 570M647 557L662 552M662 552L672 565M676 546L686 559M676 546L692 536M692 536L700 550M692 536L705 532M705 532L716 546M705 532L723 524M723 524L736 519M736 519L747 531M750 513L761 526M766 504L775 519M766 504L781 500M781 500L790 514M781 500L796 494M796 494L810 488M810 488L819 502M810 488L826 481M826 481L836 493M826 481L842 474M856 469L866 482M856 469L873 462M873 462L880 475M873 462L886 454M886 454L894 468M886 454L900 450M900 450L909 463M900 450L917 444M917 444L924 456M917 444L930 436M930 436L940 450M930 436L948 431M948 431L961 423M961 423L976 418M976 418L983 431M990 411L1001 423M990 411L1006 406M1006 406L1015 418M1006 406L1022 397M1022 397L1030 410M1034 391L1043 407M596 596L606 609M596 596L612 591M612 591L620 602M624 584L636 596M624 584L642 578M642 578L651 591M642 578L656 570M656 570L666 586M656 570L672 565M672 565L679 576M686 559L700 550M700 550L708 564M716 546L724 560M716 546L730 539M730 539L739 554M730 539L747 531M747 531L756 544M747 531L761 526M761 526L770 539M775 519L783 535M775 519L790 514M790 514L806 507M806 507L819 502M819 502L830 514M819 502L836 493M836 493L844 507M836 493L850 489M850 489L860 503M850 489L866 482M866 482L873 494M866 482L880 475M880 475L888 488M880 475L894 468M894 468L909 463M909 463L920 475M909 463L924 456M924 456L935 470M924 456L940 450M940 450L949 465M954 442L962 456M954 442L971 437M971 437L983 431M983 431L994 444M983 431L1001 423M1001 423L1009 439M1001 423L1015 418M1015 418L1022 431M1015 418L1030 410M1030 410L1043 407M1043 407L1053 418M606 609L613 622M620 602L629 615M620 602L636 596M636 596L644 609M636 596L651 591M651 591L666 586M666 586L672 599M666 586L679 576M679 576L694 570M694 570L702 585M708 564L717 580M708 564L724 560M724 560L734 573M739 554L748 565M739 554L756 544M756 544L764 559M756 544L770 539M770 539L778 552M783 535L792 545M783 535L798 527M798 527L809 541M798 527L814 522M814 522L822 535M830 514L837 528M844 507L852 521M844 507L860 503M860 503L869 514M860 503L873 494M888 488L897 504M905 484L911 498M920 475L926 491M920 475L935 470M935 470L943 482M935 470L949 465M949 465L958 476M949 465L962 456M962 456L972 470M979 452L987 466M979 452L994 444M994 444L1004 459M994 444L1009 439M1009 439L1016 451M1022 431L1038 424M1038 424L1048 438M1038 424L1053 418M613 622L623 636M613 622L629 615M629 615L636 629M629 615L644 609M644 609L653 624M644 609L657 605M657 605L666 617M657 605L672 599M672 599L690 592M690 592L702 585M702 585L711 599M702 585L717 580M717 580L728 591M717 580L734 573M734 573L741 584M734 573L748 565M748 565L757 580M748 565L764 559M778 552L787 568M778 552L792 545M792 545L803 561M792 545L809 541M809 541L816 553M809 541L822 535M822 535L832 547M822 535L837 528M837 528L848 540M837 528L852 521M852 521L863 534M852 521L869 514M869 514L878 530M869 514L882 509M911 498L923 509M926 491L935 504M926 491L943 482M943 482L951 496M943 482L958 476M958 476L966 491M958 476L972 470M972 470L980 484M972 470L987 466M987 466L996 478M987 466L1004 459M1004 459L1010 472M1004 459L1016 451M1016 451L1027 466M1016 451L1034 444M1034 444L1041 460M1034 444L1048 438M1048 438L1056 453M1048 438L1064 431M1064 431L1070 447M623 636L636 629M636 629L653 624M666 617L684 610M711 599L728 591M728 591L741 584M741 584L757 580M757 580L771 572M771 572L787 568M803 561L816 553M816 553L832 547M832 547L848 540M848 540L863 534M863 534L878 530M878 530L892 521M908 516L923 509M923 509L935 504M935 504L951 496M951 496L966 491M996 478L1010 472M1010 472L1027 466M1027 466L1041 460M1041 460L1056 453M1056 453L1070 447"/>
</g>
<clipPath id="rg4"><polygon points="838,203 902,160 902,285 870,280 820,240"/></clipPath>
<g clip-path="url(#rg4)" fill="none" stroke="#84a43a" stroke-width="1.1">
<path d="M690 178L699 192M690 178L704 172M704 172L714 186M704 172L719 162M719 162L729 178M737 153L746 167M737 153L751 147M751 147L760 161M764 138L774 152M764 138L782 130M782 130L797 121M797 121L806 135M810 113L821 130M826 108L834 119M826 108L842 99M842 99L849 113M842 99L856 91M856 91L864 103M856 91L870 82M870 82L881 98M887 75L901 65M901 65L911 79M699 192L709 206M699 192L714 186M714 186L724 201M729 178L738 191M746 167L755 182M746 167L760 161M760 161L768 177M760 161L774 152M774 152L786 166M774 152L792 143M792 143L800 160M792 143L806 135M834 119L845 135M834 119L849 113M849 113L861 126M849 113L864 103M864 103L874 120M864 103L881 98M881 98L890 111M881 98L895 88M895 88L905 104M895 88L911 79M709 206L719 221M724 201L733 212M724 201L738 191M738 191L748 205M738 191L755 182M755 182L768 177M768 177L777 190M768 177L786 166M786 166L792 182M786 166L800 160M800 160L810 173M800 160L814 151M814 151L824 164M814 151L828 142M828 142L840 157M828 142L845 135M845 135L853 151M845 135L861 126M861 126L869 141M861 126L874 120M874 120L885 133M874 120L890 111M890 111L900 124M890 111L905 104M905 104L915 116M905 104L920 93M920 93L928 111M719 221L726 237M719 221L733 212M733 212L744 228M748 205L756 218M748 205L762 198M762 198L772 211M762 198L777 190M777 190L788 205M792 182L802 194M792 182L810 173M810 173L818 186M810 173L824 164M824 164L840 157M840 157L849 170M840 157L853 151M853 151L863 164M853 151L869 141M869 141L879 155M869 141L885 133M885 133L900 124M900 124L909 140M900 124L915 116M915 116L928 111M928 111L937 122M744 228L752 240M744 228L756 218M756 218L768 233M756 218L772 211M772 211L780 225M772 211L788 205M788 205L797 218M788 205L802 194M802 194L812 209M802 194L818 186M818 186L827 203M832 180L849 170M849 170L856 188M849 170L863 164M863 164L879 155M879 155L888 170M879 155L895 146M895 146L904 160M895 146L909 140M909 140L918 154M909 140L925 132M925 132L937 122M937 122L949 136M737 249L747 264M737 249L752 240M752 240L761 257M752 240L768 233M768 233L775 249M780 225L791 242M780 225L797 218M797 218L806 233M797 218L812 209M812 209L822 225M812 209L827 203M827 203L838 215M827 203L842 195M842 195L852 209M856 188L867 200M856 188L874 178M874 178L880 191M874 178L888 170M888 170L897 183M888 170L904 160M904 160L910 176M904 160L918 154M918 154L927 168M918 154L932 147M932 147L940 161M932 147L949 136M949 136L957 153M747 264L754 280M747 264L761 257M761 257L775 249M775 249L787 264M775 249L791 242M791 242L799 254M791 242L806 233M806 233L815 248M806 233L822 225M838 215L845 229M838 215L852 209M852 209L862 224M852 209L867 200M867 200L876 215M867 200L880 191M880 191L891 207M880 191L897 183M897 183L906 199M897 183L910 176M910 176L920 190M910 176L927 168M927 168L940 161M940 161L951 176M940 161L957 153M754 280L766 291M754 280L771 272M771 272L779 286M771 272L787 264M787 264L795 276M787 264L799 254M799 254L808 268M799 254L815 248M815 248L824 262M815 248L830 238M830 238L842 254M830 238L845 229M845 229L862 224M862 224L872 238M862 224L876 215M876 215L887 227M876 215L891 207M891 207L906 199M906 199L916 213M920 190L936 181M936 181L945 196M936 181L951 176M951 176L960 189M951 176L965 165M965 165L976 181M766 291L774 306M766 291L779 286M779 286L789 299M779 286L795 276M795 276L808 268M808 268L818 284M808 268L824 262M824 262L835 274M824 262L842 254M842 254L850 267M842 254L857 246M857 246L864 260M872 238L880 252M887 227L896 242M887 227L900 220M900 220L910 234M900 220L916 213M916 213L930 206M930 206L940 220M930 206L945 196M945 196L954 212M945 196L960 189M960 189L970 202M960 189L976 181M976 181L986 194M774 306L784 320M774 306L789 299M789 299L797 315M803 291L812 304M803 291L818 284M835 274L845 291M835 274L850 267M850 267L859 281M850 267L864 260M864 260L875 274M864 260L880 252M880 252L888 266M880 252L896 242M896 242L904 257M896 242L910 234M910 234L918 249M910 234L923 227M923 227L933 242M923 227L940 220M940 220L950 234M940 220L954 212M954 212L962 226M970 202L978 217M970 202L986 194M986 194L996 210M784 320L794 337M784 320L797 315M797 315L807 327M797 315L812 304M812 304L823 320M812 304L828 296M828 296L837 311M828 296L845 291M845 291L859 281M859 281L868 296M875 274L885 286M875 274L888 266M888 266L897 281M904 257L918 249M918 249L927 263M933 242L944 257M933 242L950 234M950 234L958 247M950 234L962 226M962 226L974 239M962 226L978 217M978 217L990 233M978 217L996 210M996 210L1005 224M807 327L818 342M807 327L823 320M823 320L837 311M837 311L849 326M837 311L854 303M854 303L864 320M854 303L868 296M868 296L876 310M868 296L885 286M885 286L894 303M885 286L897 281M897 281L909 293M914 270L923 288M914 270L927 263M927 263L938 279M927 263L944 257M944 257L954 269M944 257L958 247M958 247L966 263M958 247L974 239M974 239L983 253M974 239L990 233M990 233L999 245M990 233L1005 224M1005 224L1012 237M802 349L810 364M802 349L818 342M818 342L827 356M818 342L832 335M832 335L843 347M832 335L849 326M849 326L864 320M864 320L872 331M876 310L887 324M876 310L894 303M894 303L902 318M894 303L909 293M909 293L918 310M909 293L923 288M923 288L931 300M923 288L938 279M938 279L948 292M938 279L954 269M966 263L976 278M966 263L983 253M999 245L1012 237M1012 237L1021 253M810 364L822 378M810 364L827 356M827 356L834 370M843 347L849 363M843 347L855 339M855 339L865 356M855 339L872 331M872 331L880 345M872 331L887 324M887 324L896 337M887 324L902 318M902 318L918 310M918 310L925 323M918 310L931 300M931 300L943 314M931 300L948 292M948 292L961 284M961 284L973 299M961 284L976 278M993 267L1000 281M993 267L1009 260M1009 260L1015 276M1009 260L1021 253M834 370L849 363M849 363L865 356M865 356L880 345M880 345L896 337M896 337L910 330M925 323L943 314M943 314L957 306M957 306L973 299M973 299L985 292M985 292L1000 281M1015 276L1032 266"/>
</g>
<clipPath id="rg5"><polygon points="418,95 500,95 500,160 470,178 418,168"/></clipPath>
<g clip-path="url(#rg5)" fill="none" stroke="#84a43a" stroke-width="1.1">
<path d="M317 168L330 175M327 156L338 164M327 156L334 145M334 145L346 151M334 145L341 133M341 133L355 142M341 133L350 123M350 123L363 130M350 123L356 110M356 110L369 117M365 100L377 105M365 100L374 86M374 86L387 94M374 86L383 77M383 77L395 82M383 77L390 65M390 65L403 72M390 65L397 51M406 40L419 48M413 29L428 36M413 29L421 18M421 18L433 26M421 18L430 8M330 175L338 164M338 164L346 151M346 151L357 158M355 142L365 146M363 130L369 117M369 117L382 124M369 117L377 105M377 105L389 114M377 105L387 94M387 94L397 102M387 94L395 82M395 82L405 90M395 82L403 72M403 72L414 78M403 72L409 59M409 59L424 68M409 59L419 48M419 48L428 36M428 36L438 44M428 36L433 26M433 26L448 33M433 26L443 13M443 13L453 22M341 182L351 171M351 171L363 177M351 171L357 158M357 158L365 146M365 146L377 155M365 146L375 135M375 135L385 143M375 135L382 124M382 124L394 131M382 124L389 114M389 114L404 120M389 114L397 102M397 102L410 109M405 90L418 96M405 90L414 78M414 78L424 68M424 68L430 56M430 56L438 44M438 44L450 52M438 44L448 33M448 33L460 40M453 22L466 27M353 188L365 197M353 188L363 177M363 177L373 185M363 177L369 165M369 165L382 174M377 155L390 161M377 155L385 143M385 143L397 151M385 143L394 131M394 131L405 138M394 131L404 120M404 120L415 128M404 120L410 109M410 109L423 115M410 109L418 96M418 96L432 103M418 96L428 86M428 86L437 92M428 86L434 73M434 73L446 80M434 73L443 64M443 64L450 52M450 52L463 57M460 40L466 27M365 197L379 203M365 197L373 185M373 185L382 174M382 174L393 181M390 161L403 170M390 161L397 151M405 138L418 146M405 138L415 128M415 128L426 135M415 128L423 115M423 115L434 123M423 115L432 103M432 103L443 112M432 103L437 92M437 92L451 100M437 92L446 80M446 80L460 89M446 80L454 69M454 69L466 77M454 69L463 57M463 57L476 66M463 57L470 47M480 35L492 42M379 203L391 210M379 203L385 190M385 190L393 181M393 181L405 187M393 181L403 170M403 170L416 177M403 170L409 157M409 157L423 164M409 157L418 146M418 146L431 153M418 146L426 135M426 135L439 142M426 135L434 123M443 112L451 100M451 100L463 106M451 100L460 89M460 89L472 95M460 89L466 77M466 77L479 85M466 77L476 66M476 66L486 70M476 66L483 54M483 54L495 61M483 54L492 42M492 42L502 48M391 210L404 218M391 210L399 199M399 199L410 207M399 199L405 187M405 187L418 194M416 177L426 182M416 177L423 164M423 164L431 153M431 153L444 159M431 153L439 142M439 142L451 148M439 142L446 130M446 130L454 118M454 118L468 126M463 106L476 115M463 106L472 95M472 95L483 101M479 85L491 90M479 85L486 70M486 70L498 79M495 61L508 67M495 61L502 48M502 48L515 57M404 218L416 224M404 218L410 207M410 207L422 211M410 207L418 194M418 194L432 200M418 194L426 182M426 182L440 190M426 182L436 172M436 172L446 179M436 172L444 159M444 159L454 166M444 159L451 148M451 148L463 154M451 148L458 136M458 136L472 143M458 136L468 126M468 126L478 131M468 126L476 115M476 115L488 120M491 90L504 99M498 79L512 85M498 79L508 67M508 67L520 74M416 224L428 230M416 224L422 211M422 211L434 219M422 211L432 200M432 200L444 208M432 200L440 190M440 190L451 197M440 190L446 179M446 179L459 186M446 179L454 166M454 166L463 154M463 154L476 163M463 154L472 143M472 143L478 131M478 131L492 140M478 131L488 120M488 120L499 128M488 120L496 109M496 109L504 99M504 99L512 85M512 85L524 92M512 85L520 74M520 74L532 82M520 74L526 63M526 63L540 71M428 230L434 219M434 219L448 228M434 219L444 208M444 208L455 216M444 208L451 197M451 197L463 205M451 197L459 186M459 186L472 192M459 186L468 172M468 172L478 180M468 172L476 163M476 163L488 170M482 150L496 156M482 150L492 140M492 140L504 145M492 140L499 128M499 128L512 134M509 117L519 124M517 104L527 110M540 71L553 77M438 239L452 244M438 239L448 228M448 228L455 216M455 216L467 223M455 216L463 205M463 205L476 211M472 192L484 199M472 192L478 180M478 180L491 187M478 180L488 170M488 170L501 177M496 156L507 166M496 156L504 145M504 145L517 153M504 145L512 134M512 134L524 141M512 134L519 124M519 124L532 130M519 124L527 110M527 110L540 117M536 101L549 107M536 101L545 89M545 89L556 96M545 89L553 77M553 77L564 84M452 244L464 251M452 244L458 234M458 234L472 240M458 234L467 223M467 223L481 230M467 223L476 211M476 211L487 218M476 211L484 199M484 199L495 206M491 187L505 196M491 187L501 177M507 166L519 172M507 166L517 153M517 153L524 141M524 141L537 147M524 141L532 130M540 117L553 125M540 117L549 107M549 107L560 114M549 107L556 96M556 96L564 84M564 84L575 91M464 251L475 258M464 251L472 240M472 240L484 248M472 240L481 230M481 230L491 236M481 230L487 218M487 218L500 224M487 218L495 206M495 206L507 214M495 206L505 196M505 196L512 183M512 183L525 190M519 172L533 178M519 172L529 159M529 159L541 168M529 159L537 147M537 147L549 155M553 125L564 134M553 125L560 114M560 114L573 120M560 114L567 103M567 103L580 110M567 103L575 91M475 258L489 266M484 248L497 254M484 248L491 236M491 236L504 244M500 224L511 231M507 214L520 221M507 214L516 202M516 202L529 208M516 202L525 190M525 190L533 178M533 178L544 186M533 178L541 168M541 168L551 173M541 168L549 155M549 155L559 161M549 155L556 145M556 145L568 151M556 145L564 134M564 134L577 139M564 134L573 120M580 110L594 118M580 110L588 97M588 97L602 104M489 266L497 254M497 254L504 244M504 244L511 231M511 231L520 221M520 221L529 208M536 198L544 186M544 186L551 173M551 173L559 161M559 161L568 151M568 151L577 139M577 139L584 127M584 127L594 118M594 118L602 104"/>
</g>
<clipPath id="rg6"><polygon points="440,250 520,212 600,215 625,250 600,305 548,345 445,330 410,290"/></clipPath>
<g clip-path="url(#rg6)" fill="none" stroke="#84a43a" stroke-width="1.1">
<path d="M335 101L363 101M335 101L340 123M340 123L358 122M340 123L334 135M334 135L353 141M334 135L333 155M333 155L357 155M333 155L340 174M340 174L354 179M340 174L338 195M338 195L335 218M335 218L359 217M335 218L342 240M342 240L353 238M333 283L354 277M333 283L341 302M341 302L352 300M341 302L341 321M341 321L363 317M341 321L343 342M343 342L360 344M335 363L352 354M335 363L337 382M337 382L338 398M338 398L359 394M336 418L356 423M336 418L335 434M335 434L362 442M363 101L376 101M363 101L358 122M353 141L379 141M357 155L374 160M357 155L354 179M354 179L378 180M354 179L354 198M354 198L376 201M359 217L376 216M359 217L353 238M353 238L374 241M353 238L354 255M354 277L352 300M352 300L378 299M363 317L372 318M363 317L360 344M360 344L376 334M360 344L352 354M352 354L372 364M359 394L375 400M356 423L362 442M362 442L376 442M362 442L354 463M354 463L372 456M376 101L398 104M373 124L398 118M373 124L379 141M379 141L400 136M379 141L374 160M374 160L378 180M378 180L402 181M376 201L376 216M376 216L402 216M376 216L374 241M374 241L373 255M373 255L394 256M373 255L372 280M372 280L394 277M372 280L378 299M372 318L392 322M376 334L372 364M372 364L401 355M372 364L373 376M373 376L397 379M373 376L375 400M375 400L396 396M375 400L372 418M372 418L376 442M376 442L402 434M376 442L372 456M372 456L401 455M398 104L415 97M398 104L398 118M398 118L412 114M398 118L400 136M400 136L416 138M400 136L392 158M392 158L402 181M402 181L395 201M395 201L402 216M402 216L415 223M402 216L399 237M399 237L418 234M399 237L394 256M394 256L412 256M394 277L422 274M394 277L392 297M392 322L416 322M399 332L414 341M399 332L401 355M401 355L420 364M401 355L397 379M397 379L418 384M397 379L396 396M396 396L417 399M396 396L397 414M397 414L419 423M397 414L402 434M402 434L422 434M402 434L401 455M415 97L412 114M412 114L435 124M412 114L416 138M416 138L435 134M422 164L432 153M422 164L412 179M412 179L440 174M412 179L413 202M413 202L440 203M415 223L444 222M415 223L418 234M418 234L437 240M418 234L412 256M412 256L422 274M422 274L435 282M422 274L417 297M416 322L444 318M414 341L435 342M414 341L420 364M420 364L437 352M420 364L418 384M418 384L417 399M417 399L436 404M419 423L434 423M419 423L422 434M422 434L442 438M413 459L443 462M441 99L457 96M435 124L435 134M435 134L458 135M435 134L432 153M432 153L440 174M440 174L454 179M440 174L440 203M440 203L452 202M440 203L444 222M444 222L454 214M444 222L437 240M437 240L459 236M442 261L462 258M442 261L435 282M435 282L458 282M435 282L433 296M433 296L454 301M433 296L444 318M444 318L459 318M435 342L437 352M437 352L432 376M432 376L462 374M432 376L436 404M436 404L452 398M436 404L434 423M434 423L442 438M442 438L457 440M457 96L472 98M457 96L457 123M458 135L474 133M456 158L480 158M456 158L454 179M454 179L482 181M452 202L473 204M452 202L454 214M454 214L459 236M459 236L482 241M459 236L462 258M462 258L480 260M462 258L458 282M458 282L479 276M458 282L454 301M454 301L473 301M459 318L463 333M463 333L479 340M463 333L462 354M462 354L478 362M462 354L462 374M462 374L482 377M452 398L481 398M463 416L478 418M463 416L457 440M457 440L483 438M457 440L454 459M454 459L483 457M472 98L500 104M472 98L481 117M481 117L500 117M481 117L474 133M474 133L492 138M474 133L480 158M480 158L496 162M480 158L482 181M482 181L473 204M473 204L497 197M473 204L483 222M483 222L482 241M482 241L480 260M479 276L495 284M479 276L473 301M473 301L494 304M473 301L479 313M479 313L479 340M479 340L503 334M482 377L492 377M482 377L481 398M481 398L478 418M478 418L492 421M478 418L483 438M483 438L492 435M483 438L483 457M500 104L500 117M500 117L520 122M492 138L496 162M496 162L501 184M501 184L518 179M501 184L497 197M497 197L521 195M497 197L498 222M498 222L492 235M492 235L517 235M492 235L493 256M493 256L515 259M495 284L494 304M494 304L495 315M495 315L513 320M503 334L513 343M503 334L493 354M493 354L523 356M493 354L492 377M492 377L521 375M492 377L494 394M494 394L515 394M494 394L492 421M492 421L517 414M492 421L492 435M492 435L520 439M498 463L516 461M519 101L534 96M520 122L536 112M520 122L522 134M522 134L542 134M522 134L512 160M512 160L533 162M520 218L532 219M517 235L534 234M517 235L515 259M515 259L542 253M515 259L518 283M518 283L536 282M518 283L515 301M515 301L540 294M513 320L540 319M513 320L513 343M513 343L539 344M523 356L541 360M523 356L521 375M521 375L515 394M515 394L517 414M517 414L539 417M517 414L520 439M520 439L532 442M520 439L516 461M516 461L536 458M534 96L555 99M536 112L556 122M536 112L542 134M542 134L559 139M533 162L541 178M541 178L558 182M537 194L532 219M532 219L562 219M532 219L534 234M534 234L558 235M534 234L542 253M542 253L554 258M542 253L536 282M536 282L558 283M536 282L540 294M540 294L552 297M540 319L560 318M539 344L541 360M541 360L561 358M541 378L538 402M538 402L539 417M539 417L560 419M532 442L536 458M536 458L560 458M555 99L580 100M555 99L556 122M556 122L559 139M561 158L572 164M561 158L558 182M558 182L560 201M562 219L578 213M562 219L558 235M558 235L581 240M558 235L554 258M554 258L574 254M554 258L558 283M558 283L576 284M552 297L582 298M552 297L560 318M560 318L572 322M560 318L562 334M562 334L561 358M561 358L558 373M558 373L556 402M556 402L560 419M560 419L578 416M560 419L557 433M557 433L580 444M560 458L580 458M580 100L599 96M580 100L576 123M576 123L597 114M576 123L573 144M573 144L600 133M573 144L572 164M572 164L598 155M578 178L598 173M578 178L583 199M583 199L592 200M583 199L578 213M578 213L600 223M581 240L600 244M581 240L574 254M574 254L593 260M574 254L576 284M576 284L599 275M576 284L582 298M582 298L593 295M582 298L572 322M572 322L598 322M572 322L574 341M574 341L600 339M574 341L578 364M573 382L580 393M580 393L599 395M580 393L578 416M578 416L595 418M578 416L580 444M580 444L600 434M580 444L580 458M580 458L597 455M599 96L620 102M599 96L597 114M600 133L617 135M600 133L598 155M598 155L598 173M598 173L621 180M598 173L592 200M592 200L600 223M600 223L618 218M600 223L600 244M600 244L593 260M593 260L620 256M593 260L599 275M599 275L613 283M599 275L593 295M593 295L598 322M598 322L622 314M600 339L592 361M592 361L620 363M598 374L614 379M599 395L622 398M599 395L595 418M595 418L620 418M600 434L620 444M620 102L636 103M620 102L615 121M615 121L641 123M615 121L617 135M617 135L642 140M617 135L615 159M615 159L621 180M621 180L638 173M621 180L612 202M612 202L638 201M612 202L618 218M618 218L635 222M618 218L614 238M614 238L620 256M620 256L634 259M613 283L636 273M613 283L617 293M617 293L635 304M622 314L637 321M622 314L616 340M616 340L620 363M620 363L639 355M622 398L640 393M620 418L643 413M620 418L620 444M620 444L634 436M620 444L616 461M616 461L641 461M636 103L660 98M636 103L641 123M641 123L662 114M642 140L663 133M642 140L643 154M643 154L653 162M643 154L638 173M635 222L658 215M635 222L636 235M636 235L653 244M636 235L634 259M634 259L636 273M636 273L656 283M636 273L635 304M635 304L637 321M637 321L659 313M637 321L637 333M637 333L639 355M639 355L663 364M633 380L652 381M633 380L640 393M640 393L654 394M643 413L662 418M643 413L634 436M634 436L641 461M660 98L679 103M662 114L673 123M662 114L663 133M663 133L673 135M663 133L653 162M653 162L676 154M653 162L661 181M661 181L673 180M661 181L654 203M654 203L676 195M658 215L678 214M658 215L653 244M653 244L680 244M653 244L652 255M652 255L677 258M656 283L676 277M656 283L662 303M662 303L676 295M659 313L675 321M659 313L660 335M660 335L677 333M660 335L663 364M663 364L673 363M663 364L652 381M652 381L654 394M654 394L679 400M654 394L662 418M662 418L655 439M655 439L676 439M652 458L683 454M679 103L694 103M679 103L673 123M673 123L703 122M673 123L673 135M673 135L702 134M676 154L700 154M676 154L673 180M673 180L702 177M673 180L676 195M676 195L697 199M676 195L678 214M678 214L694 219M678 214L680 244M676 277L676 295M676 295L702 304M675 321L696 316M675 321L677 333M677 333L673 363M673 363L695 355M676 382L695 374M676 382L679 400M679 400L693 395M679 400L676 420M676 420L676 439M676 439L695 436M676 439L683 454M683 454L698 453M703 122L702 134M702 134L700 154M702 177L697 199M697 199L694 219M694 219L702 238M697 257L694 276M694 276L702 304M696 316L696 343M696 343L695 355M695 355L695 374M695 374L693 395M699 424L695 436"/>
</g>
<clipPath id="rg7"><polygon points="690,200 800,205 800,235 740,255 690,240"/></clipPath>
<g clip-path="url(#rg7)" fill="none" stroke="#84a43a" stroke-width="1.1">
<path d="M625 111L645 111M630 125L628 150M620 186L641 191M620 186L628 205M628 205L648 212M628 205L625 226M625 226L628 252M628 252L624 272M624 272L621 291M621 291L644 290M621 291L629 304M629 304L649 305M627 328L630 345M630 345L645 346M645 111L663 110M646 126L662 128M646 126L641 152M641 152L645 172M645 172L641 191M641 191L648 212M648 212L663 212M648 212L640 226M640 226L666 225M640 250L660 250M640 250L644 272M644 272L664 267M644 272L644 290M644 290L663 289M644 290L649 305M649 305L646 332M646 332L661 332M646 332L645 346M663 110L662 128M662 128L666 148M661 169L684 164M669 186L663 212M663 212L681 205M663 212L666 225M666 225L688 228M660 250L688 252M660 250L664 267M664 267L688 263M664 267L663 289M663 289L689 283M667 306L688 311M667 306L661 332M661 332L687 326M661 332L669 343M686 109L706 105M686 109L684 130M684 130L705 125M684 130L690 148M690 148L702 146M682 184L681 205M681 205L688 228M688 228L704 232M688 228L688 252M688 252L708 245M688 252L688 263M688 263L703 264M689 283L688 311M688 311L707 308M688 311L687 326M687 326L704 331M687 326L681 343M706 105L705 125M705 125L726 126M705 125L702 146M702 146L707 167M704 187L726 188M704 187L706 208M704 232L726 230M708 245L728 247M703 264L724 268M704 283L725 287M707 308L720 305M707 308L704 331M704 331L730 331M704 331L703 348M729 108L726 126M726 126L745 130M726 126L730 150M730 150L723 166M723 166L749 169M723 166L726 188M725 204L726 230M726 230L740 228M728 247L724 268M724 268L725 287M725 287L748 287M725 287L720 305M720 305L741 308M720 305L730 331M730 331L742 328M725 350L743 346M742 105L765 111M742 105L745 130M745 130L770 127M740 147L760 150M740 147L749 169M749 169L763 170M749 169L750 184M750 184L768 183M750 184L749 211M749 211L767 205M749 211L740 228M740 228L763 226M740 228L748 245M748 245L765 245M746 271L765 265M748 287L761 285M741 308L767 306M742 328L743 346M743 346L762 352M765 111L788 104M765 111L770 127M770 127L760 150M760 150L785 146M763 170L785 170M763 170L768 183M768 183L782 188M768 183L767 205M767 205L763 226M763 226L783 230M765 265L761 285M761 285L782 290M761 285L767 306M762 352L788 350M788 104L803 105M788 104L783 127M783 127L785 146M785 146L800 144M782 188L782 208M782 208L783 230M783 230L789 252M789 252L808 246M789 252L784 269M784 269L810 270M784 269L782 290M788 307L809 308M788 307L783 330M783 330L801 324M783 330L788 350M788 350L808 351M803 105L826 110M800 144L805 167M809 186L802 212M802 212L824 212M802 212L801 226M801 226L822 226M801 226L808 246M808 246L820 248M808 246L810 270M810 270L821 269M810 270L803 291M803 291L825 287M809 308L823 306M801 324L808 351M808 351L828 345M826 110L828 125M828 125L822 151M822 151L828 167M828 167L823 183M823 183L842 190M824 212L822 226M822 226L845 227M822 226L820 248M820 248L846 244M820 248L821 269M821 269L849 270M821 269L825 287M823 306L845 311M829 332L847 325M842 149L870 147M842 149L844 167M844 167L870 164M844 167L842 190M842 190L860 187M842 190L848 212M848 212L845 227M846 244L864 243M846 244L849 270M849 270L863 269M842 286L863 286M842 286L845 311M845 311L847 325M847 325L866 330M847 325L850 352M869 107L865 127M865 127L870 147M870 147L870 164M870 164L860 187M860 187L862 205M863 286L864 305M866 330L860 348"/>
</g>
<g fill="none" stroke="#84a43a" stroke-width="1.1" stroke-linejoin="round" stroke-linecap="round">
<path d="M170 97L224 97M168 104L188 97M188 97L195 122L212 166L229 215L241 268M249 114L344 120M168 125L236 125M236 93L236 191M250 93L250 142M263 93L263 166M279 116L279 142M301 93L301 125M192 142L275 142M168 149L200 142M168 166L266 166M178 154L178 268M168 200L239 200M242 149L242 200M253 200L305 149L324 122M327 149L336 136L343 136L336 156L332 169L295 169M310 152L339 152M278 181L327 181M280 181L280 205M283 208L329 208M329 185L354 215L418 268M371 149L395 149M391 93L391 268M168 226L234 226M300 240L418 240M361 93L349 137L339 164L328 186M328 186L305 200L285 220L241 268M381 281L529 206L668 137M529 95L529 206M508 98L508 178M418 178L529 178M517 213L517 268M518 230L594 230M447 176L506 98M418 115L506 164M418 130L479 161M428 134L455 100M440 142L467 105M452 149L479 112M464 156L489 122M452 103L479 108L486 93M530 98L577 108L633 134M579 112L579 191M579 132L613 132M604 149L621 93M530 112L560 116L562 127L533 136M530 122L552 122M660 142L643 196M574 264L635 200M569 188L589 215L633 262M470 191L470 232M418 191L472 191M418 213L470 213M470 232L518 213M467 247L491 254L474 268M418 154L438 159M633 115L655 117L652 130L633 134M668 134L788 95L839 83M675 132L675 108L705 95M740 93L740 240M816 93L816 210M741 131L895 131M741 141L918 141M741 155L849 155M719 171L849 171M739 188L844 188M719 205L839 205M756 141L756 230M770 141L770 225M785 141L785 222M800 141L800 218M830 141L830 208M847 141L847 200M858 141L858 176M871 141L871 174M883 141L883 166M717 262L824 210L918 166M824 210L880 181L918 152M902 161L902 268M883 93L898 152M668 225L690 208M680 218L717 226L751 225M697 222L697 268M712 227L712 268M725 171L725 220M751 226L797 225M797 218L875 189L914 156L959 111L992 95M797 131L895 131M797 140L895 140M797 156L846 156M797 173L846 173M797 189L844 189M816 93L816 214M832 107L832 206M847 140L847 195M858 142L863 179M871 142L871 167M883 142L883 159M884 95L896 142L902 163L902 233M920 163L920 233M932 144L932 208L945 233M947 140L947 198M912 174L947 174M914 198L984 198L994 210L967 212M938 132L947 140M920 163L947 140M947 198L979 233M959 93L959 111M973 93L973 103M902 180L902 275L916 284L928 296L935 317L935 327M850 298L874 294L902 275M874 294L867 334L883 360M928 296L893 317L893 334M919 180L919 244M912 198L985 198L994 210L964 213M932 180L932 204L945 223L978 251L982 346M949 199L982 227L987 251M945 223L935 237M947 239L945 251L952 253L959 247L978 251M952 270L978 265M978 275L961 275L961 289L978 289M916 244L909 265L930 265L921 249M934 326L938 323L941 328L938 333L934 329L934 326M785 321L845 300L874 295"/>
</g>

<polygon fill="#c6dcc1" stroke="#1a1a1a" stroke-width="1.3" points="160,712 341,664 373,660 465,626 530,600 600,571 690,537 752,530 893,503 924,495 934,493 936,512 950,520 953,536 940,555 905,560 897,565 880,598 880,622 871,632 860,640 812,672 813,740 160,740"/>
<polygon fill="#ffffff" points="934,493 936,512 950,520 953,536 940,555 905,560 897,565 880,598 880,622 871,632 860,640 812,672 813,740 1000,740 1000,468 924,495"/>
<polygon fill="#167ab6" stroke="#1a2a40" stroke-width="1.1" points="160,676 311,638 290,583 299,580 317,638 333,639 344,629 358,610 362,610 373,587.5 388,561.7 403,542.4 418,525.2 450.2,512.3 493.2,493 547,466 562,462.9 580,458.6 621,444 700,430 745,421 809,408 840,390 855.8,386.8 861,398.3 894.7,386.8 890.5,371.5 901,366.8 887.3,352 896.8,357.3 905.2,352 905.7,363.6 937,360 952,356 952,345 958,342 959,292 972,304 975,348 1000,347 1000,468 924,495 893,503 752,530 690,537 600,571 580,581 506,610 465,626 373,660 341,664 160,714"/>
<polygon fill="#abc6e8" points="600,571 690,537 752,530 893,503 924,495 737,550 643,567 615,566"/>
<polyline fill="none" stroke="#222" stroke-width="1.4" points="615,566 643,567 737,550 924,495"/>
<polygon fill="#c6dcc1" stroke="#222" stroke-width="0.8" points="390,535 403,537 387,559.6"/>
<polygon fill="#5b3a1f" stroke="#222" stroke-width="0.8" points="557.7,466 527.6,479 500,497 471,511.3 448.5,521.3 435.5,533.7 423.6,545.6 400,571.6 372.9,602.5 377.2,602.5 404.7,580 411.8,572.7 435.5,555.5 449.6,544.5 466.2,528 500,507.5 512,498"/>
<polygon fill="#5b3a1f" stroke="#222" stroke-width="0.8" points="856,410 865,405 873,420 862,430 855,420"/>
<polygon fill="#5b3a1f" stroke="#222" stroke-width="0.8" points="842,452 860,440 866,436 882,443 877,457 857,455"/>
<polygon fill="#5b3a1f" stroke="#222" stroke-width="0.8" points="800,485 809,475 876,458 880,463 806,486"/>

<g fill="none" stroke="#90a838" stroke-width="1.2" stroke-linejoin="round">
<polyline points="343,666.8 371,731.7"/>
<polyline points="405.5,731.9 413.3,720.2 428.9,679.1 460.2,675.2 499.2,653.8 505,665.5 522.7,677.2 526.6,687 542.2,700.6 534.4,735"/>
<polyline points="512.9,696.7 526.6,687"/>
<polyline points="512.9,696.7 530.5,712.3 542.2,700.6"/>
<polyline points="505,665.5 491.4,677.2"/>
<polyline points="413,718.7 436,731.7"/>
<polyline points="298.6,705.8 328,705.8 350.5,707.6"/>
<polyline points="307.9,707.6 307.9,731.7"/>
<polyline points="320.8,696.5 335.7,694.6 339.4,702"/>
<polyline points="320.8,722.4 372.8,724.3 372.8,731.7"/>
<polyline points="222.5,728 228,722.4 237.4,728"/>
<polyline points="500.8,731.7 500.8,724.3 515.6,724.3 515.6,731.7"/>
<polyline points="542.2,700.6 578.6,686.7 622.5,669.1 631.3,670.6 751.5,702.8 766.1,698.4 783.7,669.1 820,647.1"/>
<polyline points="786.6,669.1 796.9,686.7 796.9,735"/>
<polyline points="578.6,686.7 572.7,663.3 564,642.7 549.3,639.8 540.5,648.6 543.4,650"/>
<polyline points="575.7,677.9 607.9,651.5"/>
<polyline points="593.2,663.3 599,666.2 603.5,660.3"/>
<polyline points="657.7,677.9 657.7,651.5 666.5,641.3 678.2,635.4 684.1,620.8 687,623.7 681.2,626.6"/>
<polyline points="820,647.1 859.5,621.4 861,617.8 861.7,600 869.5,579 889,553.5 936,541.8 941.8,526 928,518 924,495"/>
</g>

<polyline fill="none" stroke="#a0a040" stroke-width="1.2" points="924,495 899,410 894,386 888,368 865,335"/>
<polyline fill="none" stroke="#1a2a40" stroke-width="1.5" points="855.8,386.8 883,377.8"/>
<polyline fill="none" stroke="#a0a040" stroke-width="1.2" points="390,535 400,536.7 500,552.6 580,565 615,567"/>

<g font-family="Liberation Sans" font-weight="bold" font-size="14.8" fill="#111" stroke="#111" stroke-width="0.35" text-anchor="middle">
<text transform="translate(290.7,104.5) rotate(0.0) scale(0.88,1)" y="5" textLength="86.9" lengthAdjust="spacing">ELDER ST</text>
<text transform="translate(209.0,114.6) rotate(0.0) scale(0.88,1)" y="5" textLength="88.1" lengthAdjust="spacing">E LEE AVE</text>
<text transform="translate(231.5,137.0) rotate(0.0) scale(0.88,1)" y="5" textLength="86.9" lengthAdjust="spacing">HOLT AVE</text>
<text transform="translate(226.0,159.4) rotate(0.0) scale(0.88,1)" y="5" textLength="74.4" lengthAdjust="spacing">FOY AVE</text>
<text transform="translate(275.4,156.8) rotate(-43.2) scale(0.88,1)" y="5" textLength="126.2" lengthAdjust="spacing">CHISHOLM RD</text>
<text transform="translate(309.1,198.3) rotate(0.0) scale(0.88,1)" y="5" textLength="115.0" lengthAdjust="spacing">FLORIDA AVE</text>
<text transform="translate(318.8,215.4) rotate(0.0) scale(0.88,1)" y="5" textLength="70.5" lengthAdjust="spacing">HIGH ST</text>
<text transform="translate(410.4,121.5) rotate(-54.0) scale(0.88,1)" y="5" textLength="70.3" lengthAdjust="spacing">KIRK ST</text>
<text transform="translate(453.8,181.5) rotate(0.0) scale(0.88,1)" y="5" textLength="87.5" lengthAdjust="spacing">LAMAR ST</text>
<text transform="translate(367.1,215.9) rotate(-61.4) scale(0.88,1)" y="5" textLength="135.9" lengthAdjust="spacing">HERMITAGE DR</text>
<text transform="translate(428.7,232.8) rotate(39.5) scale(0.88,1)" y="5" textLength="97.0" lengthAdjust="spacing">HELTON DR</text>
<text transform="translate(209.0,238.4) rotate(58.4) scale(0.88,1)" y="5" textLength="125.3" lengthAdjust="spacing">SHERROD AVE</text>
<text transform="translate(272.0,222.8) rotate(32.6) scale(0.88,1)" y="5" textLength="109.5" lengthAdjust="spacing">SIMPSON ST</text>
<text transform="translate(287.6,248.6) rotate(29.3) scale(0.88,1)" y="5" textLength="103.8" lengthAdjust="spacing">HOWELL ST</text>
<text transform="translate(248.7,272.8) rotate(72.9) scale(0.88,1)" y="5" textLength="113.5" lengthAdjust="spacing">N WOOD AVE</text>
<text transform="translate(219.2,298.4) rotate(58.6) scale(0.88,1)" y="5" textLength="145.1" lengthAdjust="spacing">WILLINGHAM RD</text>
<text transform="translate(195.8,287.8) rotate(63.0) scale(0.88,1)" y="5" textLength="76.9" lengthAdjust="spacing">OLIVE ST</text>
<text transform="translate(279.6,314.6) rotate(78.5) scale(0.88,1)" y="5" textLength="124.2" lengthAdjust="spacing">PROSPECT ST</text>
<text transform="translate(326.0,326.1) rotate(51.4) scale(0.88,1)" y="5" textLength="123.9" lengthAdjust="spacing">N CHERRY ST</text>
<text transform="translate(480.8,139.8) rotate(-51.2) scale(0.88,1)" y="5" textLength="87.7" lengthAdjust="spacing">TUNE AVE</text>
<text transform="translate(519.7,157.3) rotate(-90.0) scale(0.88,1)" y="5" textLength="90.7" lengthAdjust="spacing">DARBY DR</text>
<text transform="translate(591.5,162.5) rotate(-27.2) scale(0.88,1)" y="5" textLength="145.5" lengthAdjust="spacing">FLORENCE BLVD</text>
<text transform="translate(623.7,121.5) rotate(-57.4) scale(0.88,1)" y="5" textLength="60.1" lengthAdjust="spacing">IVY LN</text>
<text transform="translate(507.5,270.0) rotate(-90.0) scale(0.88,1)" y="5" textLength="124.4" lengthAdjust="spacing">THOMPSON ST</text>
<text transform="translate(563.6,262.6) rotate(-54.4) scale(0.88,1)" y="5" textLength="165.6" lengthAdjust="spacing">SWEETWATER AVE</text>
<text transform="translate(672.8,245.9) rotate(57.0) scale(0.88,1)" y="5" textLength="131.0" lengthAdjust="spacing">N KIRKMAN ST</text>
<text transform="translate(663.5,260.9) rotate(55.4) scale(0.88,1)" y="5" textLength="104.8" lengthAdjust="spacing">N ONEAL ST</text>
<text transform="translate(649.8,263.5) rotate(57.4) scale(0.88,1)" y="5" textLength="117.4" lengthAdjust="spacing">N PATTON ST</text>
<text transform="translate(603.2,306.4) rotate(-23.2) scale(0.88,1)" y="5" textLength="112.2" lengthAdjust="spacing">NEWTON AVE</text>
<text transform="translate(775.5,197.0) rotate(0.0) scale(0.88,1)" y="5" textLength="140.3" lengthAdjust="spacing">MAHOGANY AVE</text>
<text transform="translate(783.1,239.9) rotate(-23.7) scale(0.88,1)" y="5" textLength="112.2" lengthAdjust="spacing">DUDLEY AVE</text>
<text transform="translate(773.2,260.5) rotate(-22.6) scale(0.88,1)" y="5" textLength="131.9" lengthAdjust="spacing">WOODARD AVE</text>
<text transform="translate(730.7,312.5) rotate(58.3) scale(0.88,1)" y="5" textLength="98.5" lengthAdjust="spacing">CONNER ST</text>
<text transform="translate(766.0,324.5) rotate(67.0) scale(0.88,1)" y="5" textLength="105.9" lengthAdjust="spacing">HUDSON ST</text>
<text transform="translate(786.8,320.1) rotate(55.7) scale(0.88,1)" y="5" textLength="88.4" lengthAdjust="spacing">JONES ST</text>
<text transform="translate(761.6,337.1) rotate(59.1) scale(0.88,1)" y="5" textLength="83.5" lengthAdjust="spacing">BLAIR ST</text>
<text transform="translate(812.5,284.5) rotate(-21.0) scale(0.88,1)" y="5" textLength="89.9" lengthAdjust="spacing">COLE AVE</text>
<text transform="translate(908.5,232.5) rotate(-90.0) scale(0.88,1)" y="5" textLength="121.0" lengthAdjust="spacing">SHOALS BLVD</text>
<text transform="translate(910.8,144.2) rotate(-45.0) scale(0.88,1)" y="5" textLength="141.9" lengthAdjust="spacing">HUNTSVILLE RD</text>
<text transform="translate(823.9,131.3) rotate(0.0) scale(0.88,1)" y="5" textLength="145.8" lengthAdjust="spacing">PEACHTREE AVE</text>
<text transform="translate(799.5,145.7) rotate(0.0) scale(0.88,1)" y="5" textLength="86.9" lengthAdjust="spacing">PALM AVE</text>
<text transform="translate(781.5,161.0) rotate(0.0) scale(0.88,1)" y="5" textLength="136.9" lengthAdjust="spacing">MULBERRY AVE</text>
<text transform="translate(783.8,178.7) rotate(0.0) scale(0.88,1)" y="5" textLength="98.4" lengthAdjust="spacing">ASPEN AVE</text>
<text transform="translate(986.5,304.2) rotate(-89.5) scale(0.88,1)" y="5" textLength="133.0" lengthAdjust="spacing">E LAKESIDE DR</text>
<text transform="translate(657.4,333.5) rotate(-22.0) scale(0.88,1)" y="5" textLength="122.0" lengthAdjust="spacing">CENTRAL AVE</text>
<text transform="translate(673.5,344.5) rotate(-22.2) scale(0.88,1)" y="5" textLength="90.0" lengthAdjust="spacing">COLE AVE</text>
<text transform="translate(608.3,387.7) rotate(57.0) scale(0.88,1)" y="5" textLength="123.9" lengthAdjust="spacing">INDUSTRY ST</text>
<text transform="translate(609.0,408.9) rotate(59.3) scale(0.88,1)" y="5" textLength="115.3" lengthAdjust="spacing">IRONSIDE ST</text>
<text transform="translate(579.8,396.5) rotate(57.0) scale(0.88,1)" y="5" textLength="84.2" lengthAdjust="spacing">AETNA ST</text>
<text transform="translate(672.0,403.1) rotate(57.0) scale(0.88,1)" y="5" textLength="90.1" lengthAdjust="spacing">TRADE ST</text>
<text transform="translate(549.0,407.4) rotate(70.5) scale(0.88,1)" y="5" textLength="120.3" lengthAdjust="spacing">COMMERCE ST</text>
<text transform="translate(494.8,385.5) rotate(34.7) scale(0.88,1)" y="5" textLength="116.0" lengthAdjust="spacing">S ROYAL AVE</text>
<text transform="translate(473.4,340.1) rotate(42.9) scale(0.88,1)" y="5" textLength="113.4" lengthAdjust="spacing">VIRGINIA AVE</text>
<text transform="translate(455.9,300.8) rotate(46.5) scale(0.88,1)" y="5" textLength="129.4" lengthAdjust="spacing">RAILROAD AVE</text>
<text transform="translate(488.9,444.8) rotate(-22.7) scale(0.88,1)" y="5" textLength="75.7" lengthAdjust="spacing">PARK ST</text>
<text transform="translate(373.0,316.9) rotate(56.2) scale(0.88,1)" y="5" textLength="118.4" lengthAdjust="spacing">N ROYAL AVE</text>
<text transform="translate(234.6,375.2) rotate(56.6) scale(0.88,1)" y="5" textLength="86.5" lengthAdjust="spacing">N PINE ST</text>
<text transform="translate(208.9,431.6) rotate(55.8) scale(0.88,1)" y="5" textLength="117.4" lengthAdjust="spacing">N LOCUST ST</text>
<text transform="translate(327.6,388.4) rotate(-23.4) scale(0.88,1)" y="5" textLength="145.0" lengthAdjust="spacing">E TOMBIGBEE ST</text>
<text transform="translate(340.8,398.6) rotate(-23.4) scale(0.88,1)" y="5" textLength="119.7" lengthAdjust="spacing">E MOBILE ST</text>
<text transform="translate(364.2,403.0) rotate(-24.2) scale(0.88,1)" y="5" textLength="156.8" lengthAdjust="spacing">E TENNESSEE ST</text>
<text transform="translate(364.2,416.2) rotate(-23.7) scale(0.88,1)" y="5" textLength="127.0" lengthAdjust="spacing">E COLLEGE ST</text>
<text transform="translate(395.0,430.9) rotate(-25.5) scale(0.88,1)" y="5" textLength="95.7" lengthAdjust="spacing">REEDER ST</text>
<text transform="translate(388.4,446.2) rotate(-23.7) scale(0.88,1)" y="5" textLength="147.2" lengthAdjust="spacing">E LIMESTONE ST</text>
<text transform="translate(433.9,440.4) rotate(-23.2) scale(0.88,1)" y="5" textLength="125.1" lengthAdjust="spacing">VETERANS DR</text>
<text transform="translate(271.9,465.8) rotate(58.9) scale(0.88,1)" y="5" textLength="107.4" lengthAdjust="spacing">S CEDAR ST</text>
<text transform="translate(313.0,469.5) rotate(57.2) scale(0.88,1)" y="5" textLength="103.2" lengthAdjust="spacing">S COURT ST</text>
<text transform="translate(303.5,484.1) rotate(56.5) scale(0.88,1)" y="5" textLength="80.1" lengthAdjust="spacing">S PINE ST</text>
<text transform="translate(220.7,521.2) rotate(-32.4) scale(0.88,1)" y="5" textLength="129.1" lengthAdjust="spacing">RIVERVIEW DR</text>
<text transform="translate(302.8,526.5) rotate(21.1) scale(0.88,1)" y="5" textLength="89.3" lengthAdjust="spacing">CREST ST</text>
<text transform="translate(217.8,563.0) rotate(-20.0) scale(0.88,1)" y="5" textLength="63.9" lengthAdjust="spacing">HWY 20</text>
<text transform="translate(370.1,538.9) rotate(-50.5) scale(0.88,1)" y="5" textLength="84.1" lengthAdjust="spacing">CANAL ST</text>
<text transform="translate(333.4,607.7) rotate(79.6) scale(0.88,1)" y="5" textLength="139.5" lengthAdjust="spacing">MITCHELL BLVD</text>
<text transform="translate(367.9,613.5) rotate(88.8) scale(0.88,1)" y="5" textLength="84.1" lengthAdjust="spacing">WATER ST</text>
<text transform="translate(247.0,625.3) rotate(-16.2) scale(0.88,1)" y="5" textLength="177.4" lengthAdjust="spacing">JAMES M SPANN DR</text>
<text transform="translate(459.9,656.5) rotate(-22.0) scale(0.88,1)" y="5" textLength="129.1" lengthAdjust="spacing">THUNDER TRL</text>
<text transform="translate(344.0,714.1) rotate(10.2) scale(0.88,1)" y="5" textLength="94.3" lengthAdjust="spacing">MCGEE ST</text>
<text transform="translate(688.5,673.5) rotate(13.0) scale(0.88,1)" y="5" textLength="144.1" lengthAdjust="spacing">WILSON DAM RD</text>
<text transform="translate(826.1,512.4) rotate(-15.0) scale(0.88,1)" y="5" textLength="173.4" lengthAdjust="spacing">PATTON ISLAND RD</text>
<text transform="translate(914.5,436.6) rotate(77.8) scale(0.88,1)" y="5" textLength="123.0" lengthAdjust="spacing">RIVER DAM RD</text>
</g>
<g stroke="#3a1010" stroke-width="0.9" stroke-linejoin="round">
<polygon fill="#e8141c" points="179,143.2 185.2,154.5 172.8,154.5"/>
<polygon fill="#e8141c" points="233,183.2 239.2,194.5 226.8,194.5"/>
<polygon fill="#e8141c" points="357,333.2 363.2,344.5 350.8,344.5"/>
<polygon fill="#e8141c" points="424,135.2 430.2,146.5 417.8,146.5"/>
<polygon fill="#e8141c" points="397,185.2 403.2,196.5 390.8,196.5"/>
<polygon fill="#e8141c" points="642,297.2 648.2,308.5 635.8,308.5"/>
<polygon fill="#e8141c" points="619,339.2 625.2,350.5 612.8,350.5"/>
<polygon fill="#e8141c" points="596,355.2 602.2,366.5 589.8,366.5"/>
<polygon fill="#e8141c" points="527,375.2 533.2,386.5 520.8,386.5"/>
<polygon fill="#e8141c" points="492,365.2 498.2,376.5 485.8,376.5"/>
<polygon fill="#e8141c" points="470,378.2 476.2,389.5 463.8,389.5"/>
<polygon fill="#e8141c" points="739,201.2 745.2,212.5 732.8,212.5"/>
<polygon fill="#e8141c" points="713,257.2 719.2,268.5 706.8,268.5"/>
<polygon fill="#e8141c" points="848,220.2 854.2,231.5 841.8,231.5"/>
<polygon fill="#e8141c" points="230,437.59999999999997 236.2,448.9 223.8,448.9"/>
<polygon fill="#e8141c" points="265.7,464.7 271.9,476.0 259.5,476.0"/>
<polygon fill="#e8141c" points="275.4,461.2 281.59999999999997,472.5 269.2,472.5"/>
<polygon fill="#e8141c" points="248.6,480.7 254.79999999999998,492.0 242.4,492.0"/>
<polygon fill="#e8141c" points="341.3,468.2 347.5,479.5 335.1,479.5"/>
<polygon fill="#e8141c" points="392.6,452.7 398.8,464.0 386.40000000000003,464.0"/>
<polygon fill="#e8141c" points="479,468.2 485.2,479.5 472.8,479.5"/>
<polygon fill="#e8141c" points="341.3,505.2 347.5,516.5 335.1,516.5"/>
<polygon fill="#e8141c" points="328,512.2 334.2,523.5 321.8,523.5"/>
<polygon fill="#e8141c" points="345,537.7 351.2,549.0 338.8,549.0"/>
<polygon fill="#e8141c" points="352.3,546.2 358.5,557.5 346.1,557.5"/>
</g>
<g stroke="#333" stroke-width="0.9">
<rect x="277" y="118.5" width="10" height="2.5" fill="#222" stroke="none"/><circle cx="282" cy="115.5" r="5.7" fill="#f2ea1a"/>
<rect x="464.5" y="195.0" width="10" height="2.5" fill="#222" stroke="none"/><circle cx="469.5" cy="192.0" r="5.7" fill="#f2ea1a"/>
<rect x="811" y="122.5" width="10" height="2.5" fill="#222" stroke="none"/><circle cx="816" cy="119.5" r="5.7" fill="#f2ea1a"/>
<rect x="719.5" y="231.5" width="10" height="2.5" fill="#222" stroke="none"/><circle cx="724.5" cy="228.5" r="5.7" fill="#f2ea1a"/>
<rect x="594" y="333.5" width="10" height="2.5" fill="#222" stroke="none"/><circle cx="599" cy="330.5" r="5.7" fill="#f2ea1a"/>
<rect x="645" y="317.0" width="10" height="2.5" fill="#222" stroke="none"/><circle cx="650" cy="314.0" r="5.7" fill="#f2ea1a"/>
<rect x="389" y="493.5" width="10" height="2.5" fill="#222" stroke="none"/><circle cx="394" cy="490.5" r="5.7" fill="#f2ea1a"/>
</g>
</g>
</svg>

<svg class="a" style="left:0;top:0" width="1024" height="761" viewBox="0 0 1024 761">
<defs>
<linearGradient id="vtr" x1="0" y1="0" x2="1" y2="0"><stop offset="0" stop-color="#f2f1ea"/><stop offset="0.5" stop-color="#fbfbf8"/><stop offset="1" stop-color="#f0efe6"/></linearGradient>
<linearGradient id="htr" x1="0" y1="0" x2="0" y2="1"><stop offset="0" stop-color="#f2f1ea"/><stop offset="0.5" stop-color="#fbfbf8"/><stop offset="1" stop-color="#f0efe6"/></linearGradient>
<linearGradient id="vth" x1="0" y1="0" x2="1" y2="0"><stop offset="0" stop-color="#c8d6f4"/><stop offset="0.5" stop-color="#c4d2f2"/><stop offset="1" stop-color="#b8c8ec"/></linearGradient>
<linearGradient id="hth" x1="0" y1="0" x2="0" y2="1"><stop offset="0" stop-color="#c8d6f4"/><stop offset="0.5" stop-color="#c4d2f2"/><stop offset="1" stop-color="#b8c8ec"/></linearGradient>
</defs>
<rect x="997" y="93" width="22" height="640" fill="url(#vtr)"/>
<rect x="168" y="733" width="829" height="22" fill="url(#htr)"/>
<rect x="997" y="733" width="22" height="22" fill="#ece9d8"/>
<!-- v buttons -->
<rect x="998.5" y="94.5" width="17" height="18" rx="2" fill="#c4d3f3" stroke="#e4ecfc" stroke-width="1"/>
<path d="M1003 106 L1007 102 L1011 106" stroke="#4a5a8a" stroke-width="2" fill="none"/>
<rect x="998.5" y="714.5" width="17" height="18" rx="2" fill="#c4d3f3" stroke="#e4ecfc" stroke-width="1"/>
<path d="M1003 721 L1007 725 L1011 721" stroke="#4a5a8a" stroke-width="2" fill="none"/>
<rect x="998.5" y="360.5" width="17" height="212" rx="2" fill="url(#vth)" stroke="#e0e8fa" stroke-width="1"/>
<path d="M1003 463 H1011 M1003 466 H1011 M1003 469 H1011" stroke="#a8b8e0" stroke-width="1"/>
<!-- h buttons -->
<rect x="170.5" y="734.5" width="18" height="17" rx="2" fill="#c4d3f3" stroke="#e4ecfc" stroke-width="1"/>
<path d="M182 739 L178 743 L182 747" stroke="#4a5a8a" stroke-width="2" fill="none"/>
<rect x="977.5" y="734.5" width="18" height="17" rx="2" fill="#c4d3f3" stroke="#e4ecfc" stroke-width="1"/>
<path d="M984 739 L988 743 L984 747" stroke="#4a5a8a" stroke-width="2" fill="none"/>
<rect x="385.5" y="734.5" width="277" height="17" rx="2" fill="url(#hth)" stroke="#e0e8fa" stroke-width="1"/>
<path d="M520 739 V747 M523 739 V747 M526 739 V747" stroke="#a8b8e0" stroke-width="1"/>
</svg>

</body></html>
